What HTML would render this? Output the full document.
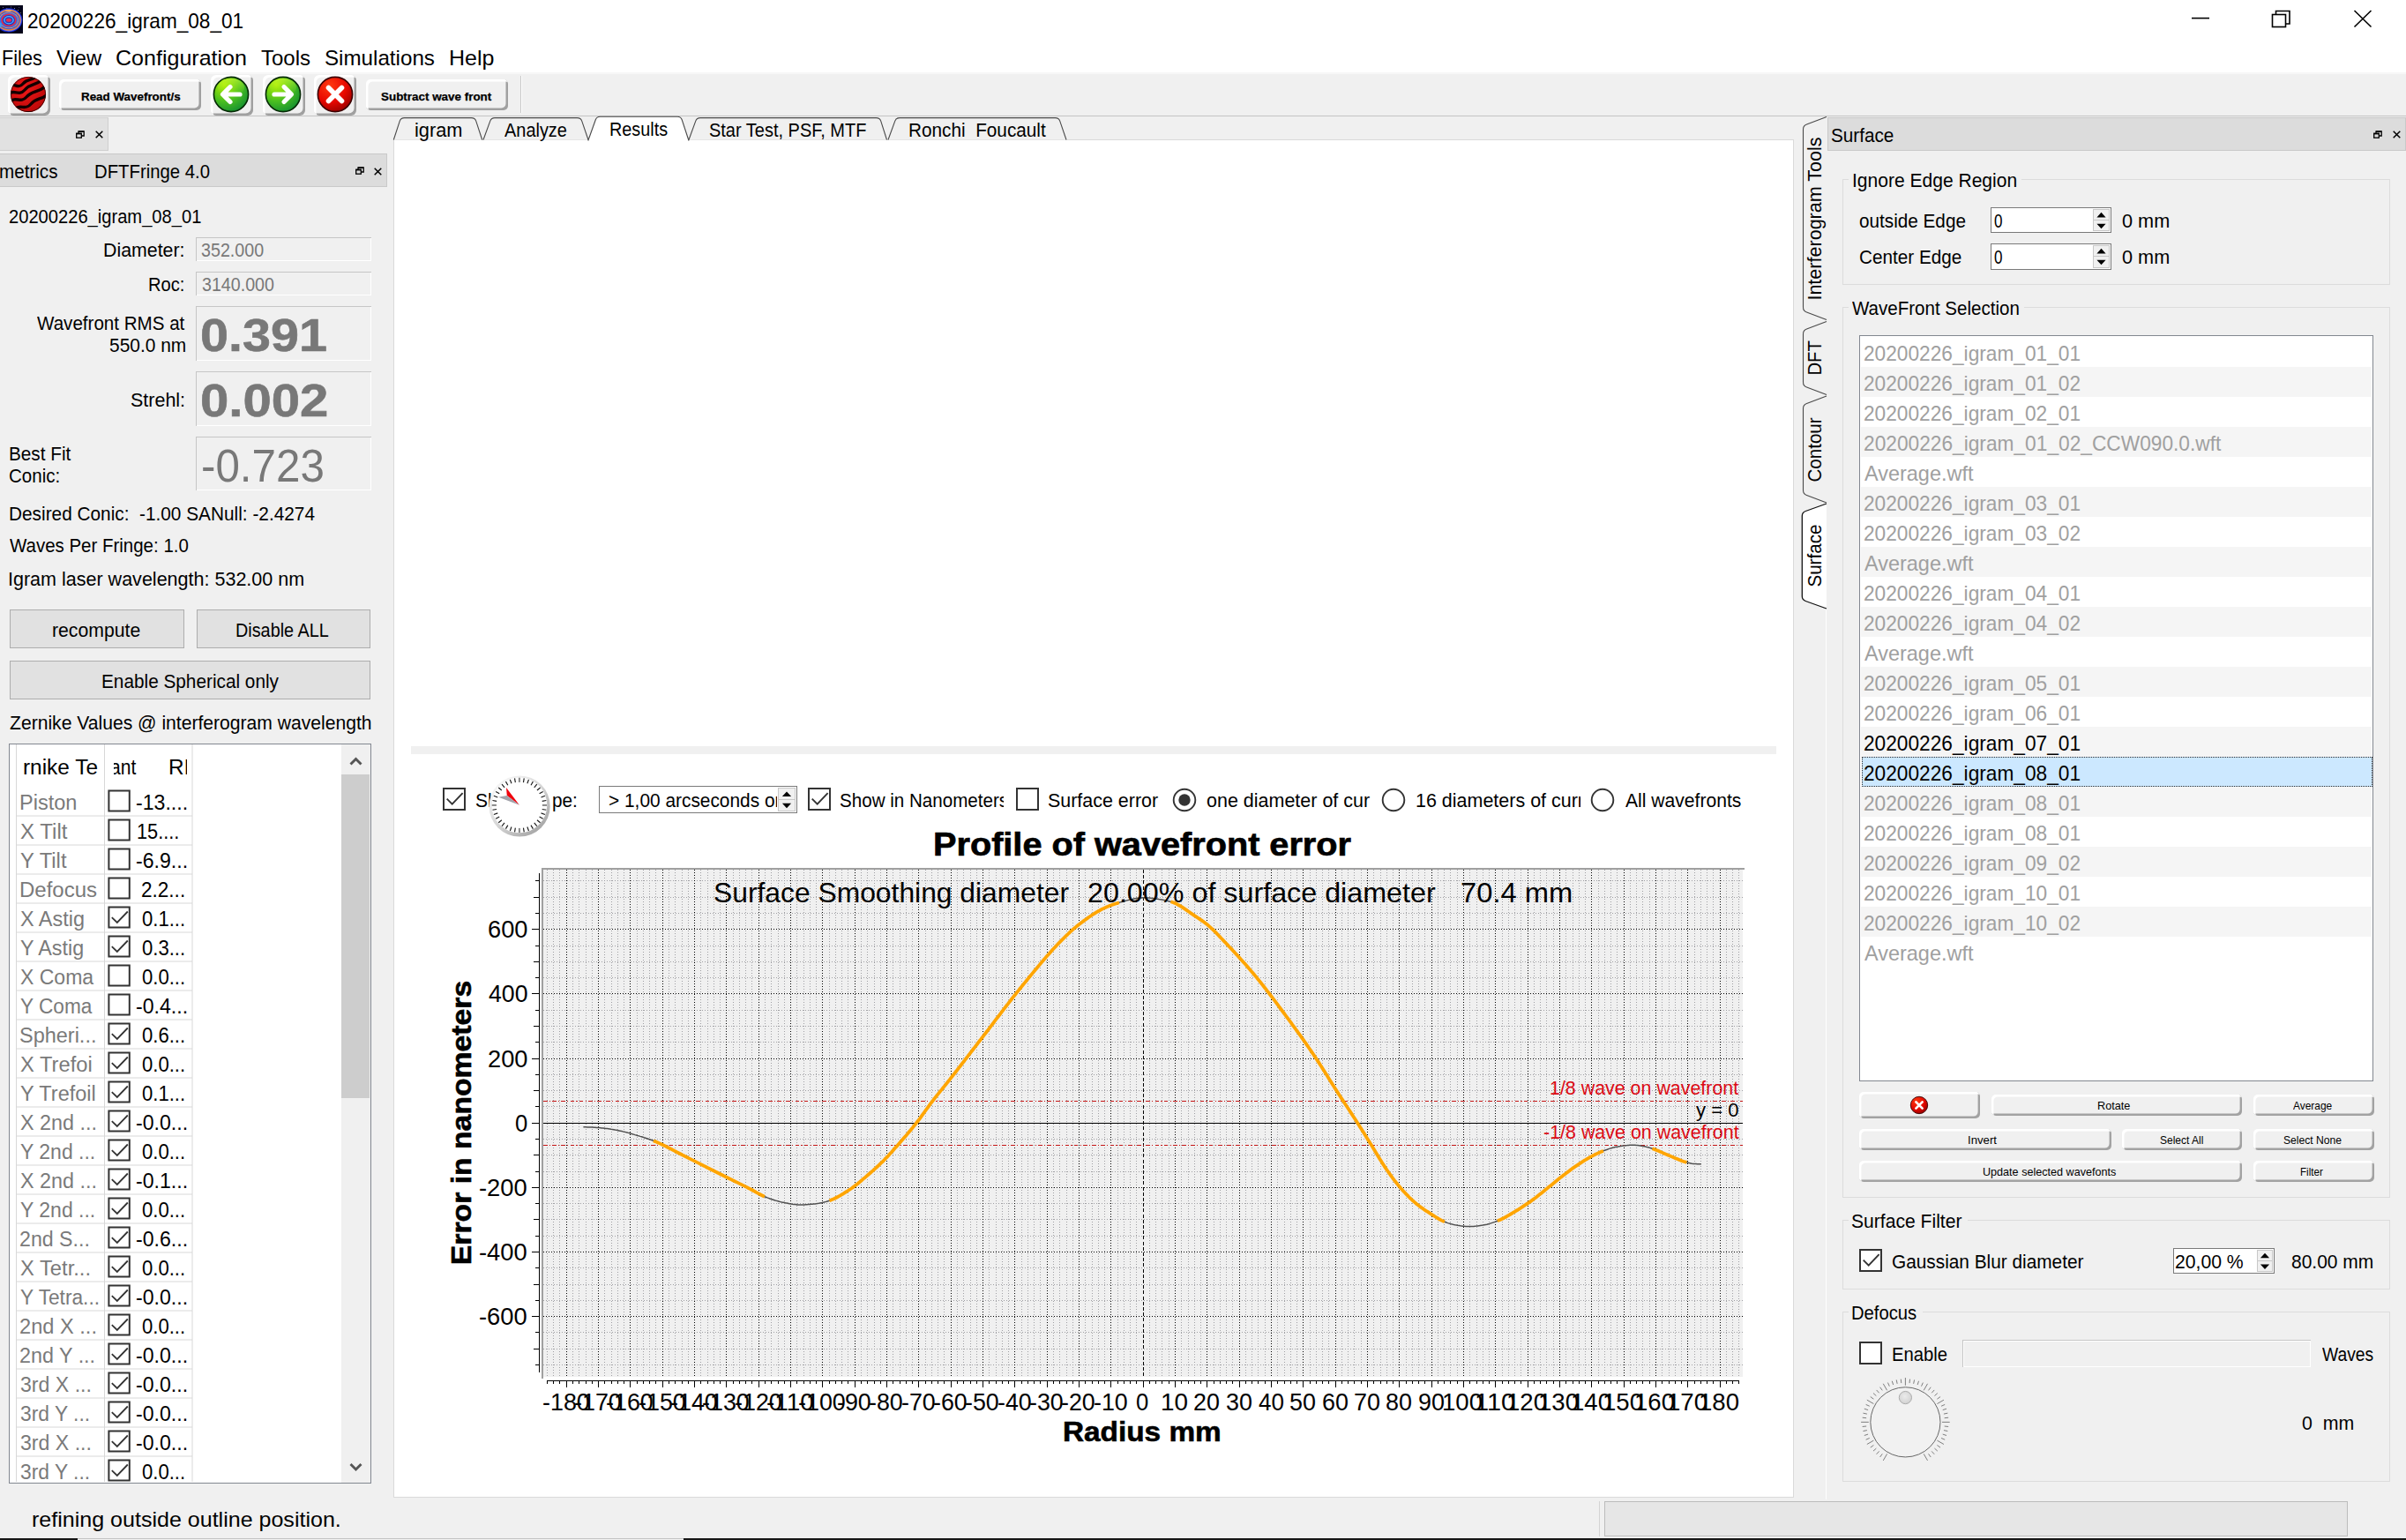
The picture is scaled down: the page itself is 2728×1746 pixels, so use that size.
<!DOCTYPE html>
<html><head><meta charset="utf-8"><title>DFTFringe</title>
<style>
html,body{margin:0;padding:0;}
body{width:2728px;height:1746px;overflow:hidden;background:#f0f0f0;position:relative;font-family:"Liberation Sans",sans-serif;}
body div,body svg,body span{position:absolute;}
.t{white-space:pre;transform-origin:0 0;display:block;}
</style></head><body>
<div style="left:0px;top:0px;width:2728px;height:82px;background:#ffffff;"></div>
<div style="left:0px;top:82px;width:2728px;height:2px;background:#f7f7f7;"></div>
<svg style="left:0px;top:6px;" width="26" height="32" viewBox="0 0 26 32"><defs><clipPath id="ic"><rect width="26" height="32"/></clipPath></defs><rect width="26" height="32" fill="#03031a"/>
<g clip-path="url(#ic)"><g transform="translate(10,16.8)">
<ellipse rx="15.4" ry="13.6" fill="#1426c4"/>
<ellipse rx="14.4" ry="12.6" fill="#6a7cff"/>
<ellipse rx="13.6" ry="11.8" fill="#f0842a"/>
<ellipse rx="12.4" ry="10.4" fill="#2a50e6"/>
<ellipse rx="11.2" ry="9.4" fill="#f09a58"/>
<ellipse rx="10.4" ry="8.6" fill="#2f6df2"/>
<ellipse rx="8.8" ry="7.4" fill="#dc3048"/>
<ellipse rx="7.0" ry="5.8" fill="#1e34c4"/>
<ellipse rx="5.8" ry="4.7" fill="#48b4ff"/>
<ellipse rx="4.4" ry="3.5" fill="#2a3cc0"/>
<ellipse rx="3.1" ry="2.0" fill="#e43050"/>
<ellipse cx="-0.5" cy="-10.6" rx="3.6" ry="1.0" fill="#f4a860"/>
<rect x="-10" y="3" width="1.6" height="5" fill="#30a0ff"/>
</g>
<g fill="#c8c8e8"><rect x="3" y="2" width="0.7" height="0.7"/><rect x="7.5" y="3.4" width="0.7" height="0.7"/><rect x="12" y="1.6" width="0.7" height="0.7"/><rect x="16" y="3" width="0.8" height="0.8"/><rect x="20" y="5" width="0.8" height="0.8"/><rect x="23" y="8.4" width="0.7" height="0.7"/><rect x="21.5" y="2.2" width="0.6" height="0.6"/></g></g></svg>
<span class="t" style="font-size:24px;line-height:24px;color:#000;left:30.76px;top:12px;transform:scaleX(0.9421);">20200226_igram_08_01</span>
<svg style="left:2470px;top:0px;" width="240" height="46" viewBox="0 0 240 46"><g stroke="#000" stroke-width="1.6" fill="none">
<line x1="15" y1="20.6" x2="35" y2="20.6"/>
<rect x="106.5" y="16.5" width="15" height="14"/>
<path d="M110.5 16.5V12.5H126V27H121.5"/>
<path d="M199.5 12L218.5 30.5M218.5 12L199.5 30.5"/></g></svg>
<span class="t" style="font-size:24px;line-height:24px;color:#000;left:1.60px;top:54px;transform:scaleX(0.9039);">Files</span>
<span class="t" style="font-size:24px;line-height:24px;color:#000;left:64.30px;top:54px;transform:scaleX(0.9894);">View</span>
<span class="t" style="font-size:24px;line-height:24px;color:#000;left:131.46px;top:54px;transform:scaleX(1.0434);">Configuration</span>
<span class="t" style="font-size:24px;line-height:24px;color:#000;left:296.00px;top:54px;">Tools</span>
<span class="t" style="font-size:24px;line-height:24px;color:#000;left:367.59px;top:54px;transform:scaleX(1.0069);">Simulations</span>
<span class="t" style="font-size:24px;line-height:24px;color:#000;left:508.96px;top:54px;transform:scaleX(1.0414);">Help</span>
<div style="left:0px;top:84px;width:2728px;height:47px;background:#f0f0f0;"></div>
<div style="left:0px;top:131px;width:2728px;height:1px;background:#c4c4c4;"></div>
<div style="left:8.5px;top:84.5px;width:48.5px;height:46.5px;background:#f0f0f0;border-radius:6px;box-shadow:inset 2.5px 2.5px 0 0 #ffffff, inset -2.5px -2.5px 0 0 #a0a0a0;"></div>
<div style="left:67.3px;top:90.3px;width:160.3px;height:34.5px;background:#f0f0f0;border-radius:5px;box-shadow:inset 2.5px 2.5px 0 0 #ffffff, inset -2.5px -2.5px 0 0 #a0a0a0;"></div>
<div style="left:238.8px;top:84.5px;width:48px;height:46.5px;background:#f0f0f0;border-radius:6px;box-shadow:inset 2.5px 2.5px 0 0 #ffffff, inset -2.5px -2.5px 0 0 #a0a0a0;"></div>
<div style="left:298px;top:84.5px;width:47.5px;height:46.5px;background:#f0f0f0;border-radius:6px;box-shadow:inset 2.5px 2.5px 0 0 #ffffff, inset -2.5px -2.5px 0 0 #a0a0a0;"></div>
<div style="left:356.4px;top:84.5px;width:48px;height:46.5px;background:#f0f0f0;border-radius:6px;box-shadow:inset 2.5px 2.5px 0 0 #ffffff, inset -2.5px -2.5px 0 0 #a0a0a0;"></div>
<div style="left:415.3px;top:90.3px;width:160.4px;height:34.5px;background:#f0f0f0;border-radius:5px;box-shadow:inset 2.5px 2.5px 0 0 #ffffff, inset -2.5px -2.5px 0 0 #a0a0a0;"></div>
<div style="left:590px;top:86px;width:1px;height:42px;background:#c8c8c8;"></div>
<div style="left:591px;top:86px;width:1px;height:42px;background:#ffffff;"></div>
<span class="t" style="font-size:12.6px;line-height:12.6px;color:#000;font-weight:700;-webkit-text-stroke:0.25px #000;left:91.60px;top:104px;transform:scaleX(1.0633);">Read Wavefront/s</span>
<span class="t" style="font-size:12.6px;line-height:12.6px;color:#000;font-weight:700;-webkit-text-stroke:0.25px #000;left:432.20px;top:104px;transform:scaleX(1.0653);">Subtract wave front</span>
<svg style="left:11px;top:86px;" width="42" height="42" viewBox="0 0 42 42"><defs><clipPath id="cw"><circle cx="21" cy="21" r="20"/></clipPath>
<radialGradient id="rw" cx="40%" cy="35%" r="70%"><stop offset="0" stop-color="#f01818"/><stop offset="1" stop-color="#b80808"/></radialGradient></defs>
<circle cx="21" cy="21" r="20" fill="url(#rw)"/>
<g clip-path="url(#cw)" stroke="#150000" stroke-width="3.4" fill="none" stroke-linecap="round">
<path d="M-2 12 C4 6,9 16,15 9 S26 6,30 0"/>
<path d="M-2 21 C5 14,10 24,17 16 S28 12,36 5"/>
<path d="M0 30 C7 22,12 32,19 24 S31 20,42 11"/>
<path d="M6 38 C12 31,17 40,24 32 S36 28,44 20"/>
<path d="M16 44 C22 38,27 46,33 39 S40 36,46 30"/>
</g>
<circle cx="21" cy="21" r="19.6" fill="none" stroke="#300000" stroke-width="0.8"/></svg>
<svg style="left:0px;top:0px;" width="620" height="140" viewBox="0 0 620 140"><defs>
<radialGradient id="gg" cx="30%" cy="22%" r="85%"><stop offset="0" stop-color="#b4f000"/><stop offset="0.55" stop-color="#4cc020"/><stop offset="1" stop-color="#149030"/></radialGradient>
<linearGradient id="gh" x1="0" y1="0" x2="0" y2="1"><stop offset="0" stop-color="#d8ff40" stop-opacity="0.55"/><stop offset="1" stop-color="#80e020" stop-opacity="0"/></linearGradient>
<radialGradient id="rg" cx="35%" cy="25%" r="85%"><stop offset="0" stop-color="#ff3a10"/><stop offset="0.55" stop-color="#e80800"/><stop offset="1" stop-color="#900000"/></radialGradient>
</defs><g transform="translate(241 86)"><circle cx="21" cy="21" r="19.6" fill="url(#gg)" stroke="#052a05" stroke-width="1.6"/>
<ellipse cx="21" cy="13" rx="15" ry="10" fill="url(#gh)"/><path d="M31 21H12M20 12.5L11.5 21L20 29.5" stroke="#fff" stroke-width="5.2" fill="none" stroke-linecap="round" stroke-linejoin="round"/></g><g transform="translate(300 86)"><circle cx="21" cy="21" r="19.6" fill="url(#gg)" stroke="#052a05" stroke-width="1.6"/>
<ellipse cx="21" cy="13" rx="15" ry="10" fill="url(#gh)"/><g transform="translate(42 0) scale(-1 1)"><path d="M31 21H12M20 12.5L11.5 21L20 29.5" stroke="#fff" stroke-width="5.2" fill="none" stroke-linecap="round" stroke-linejoin="round"/></g></g>
<g transform="translate(359 86)"><circle cx="21" cy="21" r="19.6" fill="url(#rg)" stroke="#3a0000" stroke-width="1.6"/>
<path d="M13.5 13.5L28.5 28.5M28.5 13.5L13.5 28.5" stroke="#fff" stroke-width="5.6" stroke-linecap="round"/></g></svg>
<div style="left:0px;top:133px;width:123px;height:38px;background:#e1e1e1;border:1px solid #cfcfcf;box-sizing:border-box;border-left:none;"></div>
<svg style="left:86.3px;top:147.7px;" width="10" height="9" viewBox="0 0 10 9"><g fill="none" stroke="#000" stroke-width="1.3"><rect x="0.7" y="3.2" width="5.6" height="5"/><path d="M3 3V0.8H9.2V6H6.5"/></g><rect x="0.7" y="3" width="5.6" height="1.4" fill="#000"/><rect x="3" y="0.5" width="6.2" height="1.3" fill="#000"/></svg>
<svg style="left:107.5px;top:148.2px;" width="9" height="9" viewBox="0 0 9 9"><path d="M0.7 0.7L8.3 8.3M8.3 0.7L0.7 8.3" stroke="#000" stroke-width="1.5"/></svg>
<div style="left:0px;top:174px;width:439px;height:38px;background:#dcdcdc;border:1px solid #c9c9c9;box-sizing:border-box;border-left:none;"></div>
<div style="left:0px;top:178px;width:80px;height:37px;overflow:hidden"><span class="t" style="font-size:22px;line-height:22px;color:#000;left:-1.44px;top:6px;transform:scaleX(0.9372);">metrics</span></div>
<span class="t" style="font-size:22px;line-height:22px;color:#000;left:106.58px;top:184px;transform:scaleX(0.9240);">DFTFringe 4.0</span>
<svg style="left:402.8px;top:189.3px;" width="10" height="9" viewBox="0 0 10 9"><g fill="none" stroke="#000" stroke-width="1.3"><rect x="0.7" y="3.2" width="5.6" height="5"/><path d="M3 3V0.8H9.2V6H6.5"/></g><rect x="0.7" y="3" width="5.6" height="1.4" fill="#000"/><rect x="3" y="0.5" width="6.2" height="1.3" fill="#000"/></svg>
<svg style="left:423.8px;top:189.8px;" width="9" height="9" viewBox="0 0 9 9"><path d="M0.7 0.7L8.3 8.3M8.3 0.7L0.7 8.3" stroke="#000" stroke-width="1.5"/></svg>
<span class="t" style="font-size:22px;line-height:22px;color:#000;left:9.88px;top:235px;transform:scaleX(0.9153);">20200226_igram_08_01</span>
<span class="t" style="font-size:22px;line-height:22px;color:#000;left:117.33px;top:273px;transform:scaleX(0.9695);">Diameter:</span>
<span class="t" style="font-size:22px;line-height:22px;color:#000;left:168.39px;top:312px;transform:scaleX(0.9137);">Roc:</span>
<div style="left:222px;top:269px;width:198.5px;height:26.5px;background:#f0f0f0;box-shadow:inset 1px 1px 0 0 #c6c6c6, inset -1px -1px 0 0 #ffffff;"></div>
<div style="left:222px;top:308px;width:198.5px;height:26.5px;background:#f0f0f0;box-shadow:inset 1px 1px 0 0 #c6c6c6, inset -1px -1px 0 0 #ffffff;"></div>
<span class="t" style="font-size:22px;line-height:22px;color:#787878;left:228.40px;top:273px;transform:scaleX(0.8942);">352.000</span>
<span class="t" style="font-size:22px;line-height:22px;color:#787878;left:228.80px;top:312px;transform:scaleX(0.8927);">3140.000</span>
<span class="t" style="font-size:22px;line-height:22px;color:#000;left:42.30px;top:356px;transform:scaleX(0.9352);">Wavefront RMS at</span>
<span class="t" style="font-size:22px;line-height:22px;color:#000;left:123.50px;top:381px;transform:scaleX(0.9513);">550.0 nm</span>
<div style="left:222px;top:347px;width:198.5px;height:61.5px;background:#f0f0f0;box-shadow:inset 1px 1px 0 0 #c6c6c6, inset -1px -1px 0 0 #ffffff;"></div>
<span class="t" style="font-size:51px;line-height:51px;color:#787878;font-weight:700;-webkit-text-stroke:0.6px #787878;left:227.25px;top:355px;transform:scaleX(1.1275);">0.391</span>
<span class="t" style="font-size:22px;line-height:22px;color:#000;left:147.62px;top:443px;transform:scaleX(0.9761);">Strehl:</span>
<div style="left:222px;top:421px;width:198.5px;height:61.5px;background:#f0f0f0;box-shadow:inset 1px 1px 0 0 #c6c6c6, inset -1px -1px 0 0 #ffffff;"></div>
<span class="t" style="font-size:51px;line-height:51px;color:#787878;font-weight:700;-webkit-text-stroke:0.6px #787878;left:227.22px;top:429px;transform:scaleX(1.1387);">0.002</span>
<span class="t" style="font-size:22px;line-height:22px;color:#000;left:9.86px;top:504px;transform:scaleX(0.9420);">Best Fit</span>
<span class="t" style="font-size:22px;line-height:22px;color:#000;left:9.87px;top:529px;transform:scaleX(0.9328);">Conic:</span>
<div style="left:222px;top:495px;width:198.5px;height:61.2px;background:#f0f0f0;box-shadow:inset 1px 1px 0 0 #c6c6c6, inset -1px -1px 0 0 #ffffff;"></div>
<span class="t" style="font-size:52px;line-height:52px;color:#787878;left:227.70px;top:502px;transform:scaleX(0.9483);">-0.723</span>
<span class="t" style="font-size:22px;line-height:22px;color:#000;left:9.85px;top:572px;transform:scaleX(0.9458);">Desired Conic:  -1.00 SANull: -2.4274</span>
<span class="t" style="font-size:22px;line-height:22px;color:#000;left:10.80px;top:608px;transform:scaleX(0.9302);">Waves Per Fringe: 1.0</span>
<span class="t" style="font-size:22px;line-height:22px;color:#000;left:8.84px;top:646px;transform:scaleX(0.9782);">Igram laser wavelength: 532.00 nm</span>
<div style="left:11px;top:691px;width:198px;height:43.8px;background:#e1e1e1;border:1px solid #adadad;box-sizing:border-box;"></div>
<div style="left:223px;top:691px;width:197px;height:43.8px;background:#e1e1e1;border:1px solid #adadad;box-sizing:border-box;"></div>
<div style="left:11px;top:749px;width:409px;height:43.6px;background:#e1e1e1;border:1px solid #adadad;box-sizing:border-box;"></div>
<span class="t" style="font-size:22px;line-height:22px;color:#000;left:59.34px;top:704px;transform:scaleX(0.9639);">recompute</span>
<span class="t" style="font-size:22px;line-height:22px;color:#000;left:267.40px;top:704px;transform:scaleX(0.9004);">Disable ALL</span>
<span class="t" style="font-size:22px;line-height:22px;color:#000;left:114.56px;top:762px;transform:scaleX(0.9443);">Enable Spherical only</span>
<span class="t" style="font-size:22px;line-height:22px;color:#000;left:10.60px;top:809px;transform:scaleX(0.9595);">Zernike Values @ interferogram wavelength</span>
<div style="left:10px;top:843px;width:411px;height:838.5px;background:#ffffff;border:1px solid #828790;box-sizing:border-box;"></div>
<svg style="left:10.5px;top:844px;" width="408.5" height="836" viewBox="0 0 408.5 836"><g stroke="#d8d8d8" stroke-width="1">
<path d="M7.5 0V836M107.5 0V836M207 0V836"/><path d="M7 81.0H207"/><path d="M7 114.0H207"/><path d="M7 147.0H207"/><path d="M7 180.0H207"/><path d="M7 213.0H207"/><path d="M7 246.0H207"/><path d="M7 279.0H207"/><path d="M7 312.0H207"/><path d="M7 345.0H207"/><path d="M7 378.0H207"/><path d="M7 411.0H207"/><path d="M7 444.0H207"/><path d="M7 477.0H207"/><path d="M7 510.0H207"/><path d="M7 543.0H207"/><path d="M7 576.0H207"/><path d="M7 609.0H207"/><path d="M7 642.0H207"/><path d="M7 675.0H207"/><path d="M7 708.0H207"/><path d="M7 741.0H207"/><path d="M7 774.0H207"/><path d="M7 807.0H207"/><path d="M7 840.0H207"/></g></svg>
<div style="left:19.5px;top:853px;width:98.0px;height:38px;overflow:hidden"><span class="t" style="font-size:23px;line-height:23px;color:#000;left:6.44px;top:6px;transform:scaleX(1.0604);">rnike Te</span></div>
<div style="left:128.6px;top:853px;width:31.400000000000006px;height:38px;overflow:hidden"><span class="t" style="font-size:23px;line-height:23px;color:#000;left:-3.40px;top:6px;transform:scaleX(0.9146);">ant</span></div>
<div style="left:160px;top:853px;width:51.80000000000001px;height:38px;overflow:hidden"><span class="t" style="font-size:23px;line-height:23px;color:#000;left:30.64px;top:6px;transform:scaleX(1.0577);">RI</span></div>
<span class="t" style="font-size:23px;line-height:23px;color:#7a7a7a;left:21.98px;top:899px;transform:scaleX(1.0236);">Piston</span>
<span class="t" style="font-size:23px;line-height:23px;color:#000;left:154.29px;top:899px;transform:scaleX(1.0051);">-13....</span>
<span class="t" style="font-size:23px;line-height:23px;color:#7a7a7a;left:23.00px;top:932px;transform:scaleX(1.0451);">X Tilt</span>
<span class="t" style="font-size:23px;line-height:23px;color:#000;left:154.55px;top:932px;transform:scaleX(0.9456);">15....</span>
<span class="t" style="font-size:23px;line-height:23px;color:#7a7a7a;left:23.00px;top:965px;transform:scaleX(1.0355);">Y Tilt</span>
<span class="t" style="font-size:23px;line-height:23px;color:#000;left:154.29px;top:965px;transform:scaleX(1.0051);">-6.9...</span>
<span class="t" style="font-size:23px;line-height:23px;color:#7a7a7a;left:21.96px;top:998px;transform:scaleX(1.0437);">Defocus</span>
<span class="t" style="font-size:23px;line-height:23px;color:#000;left:160.22px;top:998px;transform:scaleX(0.9804);">2.2...</span>
<span class="t" style="font-size:23px;line-height:23px;color:#7a7a7a;left:23.00px;top:1031px;transform:scaleX(1.0198);">X Astig</span>
<span class="t" style="font-size:23px;line-height:23px;color:#000;left:161.20px;top:1031px;transform:scaleX(0.9607);">0.1...</span>
<span class="t" style="font-size:23px;line-height:23px;color:#7a7a7a;left:23.00px;top:1064px;transform:scaleX(1.0129);">Y Astig</span>
<span class="t" style="font-size:23px;line-height:23px;color:#000;left:161.20px;top:1064px;transform:scaleX(0.9607);">0.3...</span>
<span class="t" style="font-size:23px;line-height:23px;color:#7a7a7a;left:23.00px;top:1097px;">X Coma</span>
<span class="t" style="font-size:23px;line-height:23px;color:#000;left:161.20px;top:1097px;transform:scaleX(0.9607);">0.0...</span>
<span class="t" style="font-size:23px;line-height:23px;color:#7a7a7a;left:23.00px;top:1130px;transform:scaleX(0.9845);">Y Coma</span>
<span class="t" style="font-size:23px;line-height:23px;color:#000;left:154.29px;top:1130px;transform:scaleX(1.0051);">-0.4...</span>
<span class="t" style="font-size:23px;line-height:23px;color:#7a7a7a;left:21.98px;top:1163px;transform:scaleX(1.0208);">Spheri...</span>
<span class="t" style="font-size:23px;line-height:23px;color:#000;left:161.20px;top:1163px;transform:scaleX(0.9607);">0.6...</span>
<span class="t" style="font-size:23px;line-height:23px;color:#7a7a7a;left:23.00px;top:1196px;transform:scaleX(1.0311);">X Trefoi</span>
<span class="t" style="font-size:23px;line-height:23px;color:#000;left:161.20px;top:1196px;transform:scaleX(0.9607);">0.0...</span>
<span class="t" style="font-size:23px;line-height:23px;color:#7a7a7a;left:23.00px;top:1229px;transform:scaleX(1.0219);">Y Trefoil</span>
<span class="t" style="font-size:23px;line-height:23px;color:#000;left:161.20px;top:1229px;transform:scaleX(0.9607);">0.1...</span>
<span class="t" style="font-size:23px;line-height:23px;color:#7a7a7a;left:23.00px;top:1262px;transform:scaleX(1.0145);">X 2nd ...</span>
<span class="t" style="font-size:23px;line-height:23px;color:#000;left:154.29px;top:1262px;transform:scaleX(1.0051);">-0.0...</span>
<span class="t" style="font-size:23px;line-height:23px;color:#7a7a7a;left:23.00px;top:1295px;">Y 2nd ...</span>
<span class="t" style="font-size:23px;line-height:23px;color:#000;left:161.20px;top:1295px;transform:scaleX(0.9607);">0.0...</span>
<span class="t" style="font-size:23px;line-height:23px;color:#7a7a7a;left:23.00px;top:1328px;transform:scaleX(1.0145);">X 2nd ...</span>
<span class="t" style="font-size:23px;line-height:23px;color:#000;left:154.29px;top:1328px;transform:scaleX(1.0051);">-0.1...</span>
<span class="t" style="font-size:23px;line-height:23px;color:#7a7a7a;left:23.00px;top:1361px;">Y 2nd ...</span>
<span class="t" style="font-size:23px;line-height:23px;color:#000;left:161.20px;top:1361px;transform:scaleX(0.9607);">0.0...</span>
<span class="t" style="font-size:23px;line-height:23px;color:#7a7a7a;left:21.99px;top:1394px;transform:scaleX(1.0080);">2nd S...</span>
<span class="t" style="font-size:23px;line-height:23px;color:#000;left:154.29px;top:1394px;transform:scaleX(1.0051);">-0.6...</span>
<span class="t" style="font-size:23px;line-height:23px;color:#7a7a7a;left:23.00px;top:1427px;transform:scaleX(1.0316);">X Tetr...</span>
<span class="t" style="font-size:23px;line-height:23px;color:#000;left:161.20px;top:1427px;transform:scaleX(0.9607);">0.0...</span>
<span class="t" style="font-size:23px;line-height:23px;color:#7a7a7a;left:23.00px;top:1460px;transform:scaleX(0.9874);">Y Tetra...</span>
<span class="t" style="font-size:23px;line-height:23px;color:#000;left:154.29px;top:1460px;transform:scaleX(1.0051);">-0.0...</span>
<span class="t" style="font-size:23px;line-height:23px;color:#7a7a7a;left:21.97px;top:1493px;transform:scaleX(1.0267);">2nd X ...</span>
<span class="t" style="font-size:23px;line-height:23px;color:#000;left:161.20px;top:1493px;transform:scaleX(0.9607);">0.0...</span>
<span class="t" style="font-size:23px;line-height:23px;color:#7a7a7a;left:21.99px;top:1526px;transform:scaleX(1.0147);">2nd Y ...</span>
<span class="t" style="font-size:23px;line-height:23px;color:#000;left:154.29px;top:1526px;transform:scaleX(1.0051);">-0.0...</span>
<span class="t" style="font-size:23px;line-height:23px;color:#7a7a7a;left:23.00px;top:1559px;transform:scaleX(1.0045);">3rd X ...</span>
<span class="t" style="font-size:23px;line-height:23px;color:#000;left:154.29px;top:1559px;transform:scaleX(1.0051);">-0.0...</span>
<span class="t" style="font-size:23px;line-height:23px;color:#7a7a7a;left:23.00px;top:1592px;transform:scaleX(0.9919);">3rd Y ...</span>
<span class="t" style="font-size:23px;line-height:23px;color:#000;left:154.29px;top:1592px;transform:scaleX(1.0051);">-0.0...</span>
<span class="t" style="font-size:23px;line-height:23px;color:#7a7a7a;left:23.00px;top:1625px;transform:scaleX(1.0045);">3rd X ...</span>
<span class="t" style="font-size:23px;line-height:23px;color:#000;left:154.29px;top:1625px;transform:scaleX(1.0051);">-0.0...</span>
<span class="t" style="font-size:23px;line-height:23px;color:#7a7a7a;left:23.00px;top:1658px;transform:scaleX(0.9919);">3rd Y ...</span>
<span class="t" style="font-size:23px;line-height:23px;color:#000;left:161.20px;top:1658px;transform:scaleX(0.9607);">0.0...</span>
<svg style="left:0px;top:0px;" width="230" height="1681" viewBox="0 0 230 1681"><rect x="123.4" y="896.5" width="23.4" height="23" fill="#fff" stroke="#333" stroke-width="2"/><rect x="123.4" y="929.5" width="23.4" height="23" fill="#fff" stroke="#333" stroke-width="2"/><rect x="123.4" y="962.5" width="23.4" height="23" fill="#fff" stroke="#333" stroke-width="2"/><rect x="123.4" y="995.5" width="23.4" height="23" fill="#fff" stroke="#333" stroke-width="2"/><rect x="123.4" y="1028.5" width="23.4" height="23" fill="#fff" stroke="#333" stroke-width="2"/><path d="M126.8 1040.1l6 5.8l12-12.4" fill="none" stroke="#333" stroke-width="1.8"/><rect x="123.4" y="1061.5" width="23.4" height="23" fill="#fff" stroke="#333" stroke-width="2"/><path d="M126.8 1073.1l6 5.8l12-12.4" fill="none" stroke="#333" stroke-width="1.8"/><rect x="123.4" y="1094.5" width="23.4" height="23" fill="#fff" stroke="#333" stroke-width="2"/><rect x="123.4" y="1127.5" width="23.4" height="23" fill="#fff" stroke="#333" stroke-width="2"/><rect x="123.4" y="1160.5" width="23.4" height="23" fill="#fff" stroke="#333" stroke-width="2"/><path d="M126.8 1172.1l6 5.8l12-12.4" fill="none" stroke="#333" stroke-width="1.8"/><rect x="123.4" y="1193.5" width="23.4" height="23" fill="#fff" stroke="#333" stroke-width="2"/><path d="M126.8 1205.1l6 5.8l12-12.4" fill="none" stroke="#333" stroke-width="1.8"/><rect x="123.4" y="1226.5" width="23.4" height="23" fill="#fff" stroke="#333" stroke-width="2"/><path d="M126.8 1238.1l6 5.8l12-12.4" fill="none" stroke="#333" stroke-width="1.8"/><rect x="123.4" y="1259.5" width="23.4" height="23" fill="#fff" stroke="#333" stroke-width="2"/><path d="M126.8 1271.1l6 5.8l12-12.4" fill="none" stroke="#333" stroke-width="1.8"/><rect x="123.4" y="1292.5" width="23.4" height="23" fill="#fff" stroke="#333" stroke-width="2"/><path d="M126.8 1304.1l6 5.8l12-12.4" fill="none" stroke="#333" stroke-width="1.8"/><rect x="123.4" y="1325.5" width="23.4" height="23" fill="#fff" stroke="#333" stroke-width="2"/><path d="M126.8 1337.1l6 5.8l12-12.4" fill="none" stroke="#333" stroke-width="1.8"/><rect x="123.4" y="1358.5" width="23.4" height="23" fill="#fff" stroke="#333" stroke-width="2"/><path d="M126.8 1370.1l6 5.8l12-12.4" fill="none" stroke="#333" stroke-width="1.8"/><rect x="123.4" y="1391.5" width="23.4" height="23" fill="#fff" stroke="#333" stroke-width="2"/><path d="M126.8 1403.1l6 5.8l12-12.4" fill="none" stroke="#333" stroke-width="1.8"/><rect x="123.4" y="1424.5" width="23.4" height="23" fill="#fff" stroke="#333" stroke-width="2"/><path d="M126.8 1436.1l6 5.8l12-12.4" fill="none" stroke="#333" stroke-width="1.8"/><rect x="123.4" y="1457.5" width="23.4" height="23" fill="#fff" stroke="#333" stroke-width="2"/><path d="M126.8 1469.1l6 5.8l12-12.4" fill="none" stroke="#333" stroke-width="1.8"/><rect x="123.4" y="1490.5" width="23.4" height="23" fill="#fff" stroke="#333" stroke-width="2"/><path d="M126.8 1502.1l6 5.8l12-12.4" fill="none" stroke="#333" stroke-width="1.8"/><rect x="123.4" y="1523.5" width="23.4" height="23" fill="#fff" stroke="#333" stroke-width="2"/><path d="M126.8 1535.1l6 5.8l12-12.4" fill="none" stroke="#333" stroke-width="1.8"/><rect x="123.4" y="1556.5" width="23.4" height="23" fill="#fff" stroke="#333" stroke-width="2"/><path d="M126.8 1568.1l6 5.8l12-12.4" fill="none" stroke="#333" stroke-width="1.8"/><rect x="123.4" y="1589.5" width="23.4" height="23" fill="#fff" stroke="#333" stroke-width="2"/><path d="M126.8 1601.1l6 5.8l12-12.4" fill="none" stroke="#333" stroke-width="1.8"/><rect x="123.4" y="1622.5" width="23.4" height="23" fill="#fff" stroke="#333" stroke-width="2"/><path d="M126.8 1634.1l6 5.8l12-12.4" fill="none" stroke="#333" stroke-width="1.8"/><rect x="123.4" y="1655.5" width="23.4" height="23" fill="#fff" stroke="#333" stroke-width="2"/><path d="M126.8 1667.1l6 5.8l12-12.4" fill="none" stroke="#333" stroke-width="1.8"/></svg>
<div style="left:10.5px;top:1680.5px;width:410.5px;height:1px;background:#828790;"></div>
<div style="left:0px;top:1681.5px;width:440px;height:16px;background:#f0f0f0;"></div>
<div style="left:387px;top:844px;width:33px;height:836.5px;background:#f0f0f0;"></div>
<div style="left:387px;top:878px;width:32px;height:367px;background:#cdcdcd;"></div>
<svg style="left:387px;top:844.5px;" width="33" height="836" viewBox="0 0 33 836"><g fill="none" stroke="#555" stroke-width="2.9"><path d="M10.5 21.5L16.5 15.5L22.5 21.5"/><path d="M10.5 815L16.5 821L22.5 815"/></g></svg>
<div style="left:446px;top:158px;width:1588px;height:1540px;background:#ffffff;border:1px solid #dadada;box-sizing:border-box;"></div>
<svg style="left:0px;top:0px;" width="1300" height="165" viewBox="0 0 1300 165"><path d="M446.3 158.5L453.3 137.1Q454.5 133.6 458.5 133.6H534.5Q538.5 133.6 539.7 137.1L546.7 158.5" fill="#f0f0f0" stroke="#4a4a4a" stroke-width="1.1"/><path d="M548 158.5L555.8 137.1Q557.0 133.6 561.0 133.6H654.5Q658.5 133.6 659.7 137.1L667 158.5" fill="#f0f0f0" stroke="#4a4a4a" stroke-width="1.1"/><path d="M781 158.5L788.8 137.1Q790.0 133.6 794.0 133.6H993.5Q997.5 133.6 998.7 137.1L1005.5 158.5" fill="#f0f0f0" stroke="#4a4a4a" stroke-width="1.1"/><path d="M1007 158.5L1014.8 137.1Q1016.0 133.6 1020.0 133.6H1196.5Q1200.5 133.6 1201.7 137.1L1209 158.5" fill="#f0f0f0" stroke="#4a4a4a" stroke-width="1.1"/><path d="M666.8 159.5L675.3 135.7Q676.5 132.2 680.5 132.2H768.0Q772.0 132.2 773.2 135.7L781 159.5" fill="#ffffff" stroke="#4a4a4a" stroke-width="1.1"/></svg>
<div style="left:668px;top:158px;width:112px;height:2px;background:#ffffff;"></div>
<span class="t" style="font-size:22px;line-height:22px;color:#000;left:469.81px;top:137px;transform:scaleX(0.9908);">igram</span>
<span class="t" style="font-size:22px;line-height:22px;color:#000;left:572.30px;top:137px;transform:scaleX(0.9060);">Analyze</span>
<span class="t" style="font-size:22px;line-height:22px;color:#000;left:690.90px;top:136px;transform:scaleX(0.9011);">Results</span>
<span class="t" style="font-size:22px;line-height:22px;color:#000;left:804.29px;top:137px;transform:scaleX(0.9080);">Star Test, PSF, MTF</span>
<span class="t" style="font-size:22px;line-height:22px;color:#000;left:1030.36px;top:137px;transform:scaleX(0.9434);">Ronchi  Foucault</span>
<div style="left:466px;top:845.5px;width:1548px;height:9.5px;background:#f0f0f0;"></div>
<svg style="left:502px;top:893px;" width="26" height="26" viewBox="0 0 26 26"><rect x="1" y="1" width="24" height="24" fill="#fff" stroke="#333" stroke-width="2"/><path d="M4.7 12.7L10.7 18.7L22.6 6.2" fill="none" stroke="#333" stroke-width="1.9"/></svg>
<span class="t" style="font-size:22px;line-height:22px;color:#000;left:538.64px;top:897px;transform:scaleX(0.9562);">Sl</span>
<span class="t" style="font-size:22px;line-height:22px;color:#000;left:625.56px;top:897px;transform:scaleX(0.9448);">pe:</span>
<div style="left:679.4px;top:891px;width:225px;height:31px;background:#ffffff;border:1px solid #7a7a7a;box-sizing:border-box;"></div>
<div style="left:882.4px;top:893px;width:20px;height:27px;background:#f0f0f0;border:1px solid #c8c8c8;box-sizing:border-box;"></div>
<div style="left:882.4px;top:906.0px;width:20px;height:1px;background:#c8c8c8;"></div>
<svg style="left:882.4px;top:893px;" width="20" height="27" viewBox="0 0 20 27"><path d="M4.9 10.0L10.0 4.4L15.1 10.0Z M4.9 17.7L10.0 23.3L15.1 17.7Z" fill="#000"/></svg>
<div style="left:684px;top:891px;width:196.60000000000002px;height:37px;overflow:hidden"><span class="t" style="font-size:22px;line-height:22px;color:#000;left:5.65px;top:6px;transform:scaleX(0.9485);">&gt; 1,00 arcseconds or</span></div>
<svg style="left:916px;top:893px;" width="26" height="26" viewBox="0 0 26 26"><rect x="1" y="1" width="24" height="24" fill="#fff" stroke="#333" stroke-width="2"/><path d="M4.7 12.7L10.7 18.7L22.6 6.2" fill="none" stroke="#333" stroke-width="1.9"/></svg>
<div style="left:950px;top:891px;width:188.20000000000005px;height:37px;overflow:hidden"><span class="t" style="font-size:22px;line-height:22px;color:#000;left:2.36px;top:6px;transform:scaleX(0.9360);">Show in Nanometers</span></div>
<svg style="left:1152px;top:893px;" width="26" height="26" viewBox="0 0 26 26"><rect x="1" y="1" width="24" height="24" fill="#fff" stroke="#333" stroke-width="2"/></svg>
<span class="t" style="font-size:22px;line-height:22px;color:#000;left:1188.03px;top:897px;transform:scaleX(0.9744);">Surface error</span>
<svg style="left:1328px;top:891.5px;" width="30" height="30" viewBox="0 0 30 30"><circle cx="15" cy="15" r="12.3" fill="#fff" stroke="#333" stroke-width="1.9"/><circle cx="15" cy="15" r="6.7" fill="#333"/></svg>
<div style="left:1360px;top:891px;width:193.79999999999995px;height:37px;overflow:hidden"><span class="t" style="font-size:22px;line-height:22px;color:#000;left:8.00px;top:6px;transform:scaleX(0.9769);">one diameter of curr</span></div>
<svg style="left:1565px;top:891.5px;" width="30" height="30" viewBox="0 0 30 30"><circle cx="15" cy="15" r="12.3" fill="#fff" stroke="#333" stroke-width="1.9"/></svg>
<div style="left:1600px;top:891px;width:192.20000000000005px;height:37px;overflow:hidden"><span class="t" style="font-size:22px;line-height:22px;color:#000;left:4.82px;top:6px;transform:scaleX(0.9763);">16 diameters of curr</span></div>
<svg style="left:1802px;top:891.5px;" width="30" height="30" viewBox="0 0 30 30"><circle cx="15" cy="15" r="12.3" fill="#fff" stroke="#333" stroke-width="1.9"/></svg>
<span class="t" style="font-size:22px;line-height:22px;color:#000;left:1842.50px;top:897px;transform:scaleX(0.9588);">All wavefronts</span>
<svg style="left:520px;top:870px;" width="140" height="90" viewBox="0 0 140 90"><defs><linearGradient id="cring" x1="0.15" y1="0.1" x2="0.85" y2="0.9"><stop offset="0" stop-color="#f6f6f6"/><stop offset="0.5" stop-color="#d6d6d6"/><stop offset="1" stop-color="#a6a6a6"/></linearGradient></defs>
<circle cx="69.10" cy="44.00" r="34.6" fill="url(#cring)"/>
<circle cx="68.90" cy="42.90" r="31.4" fill="#ffffff"/><line x1="68.90" y1="16.90" x2="68.90" y2="11.70" stroke="#8c8c8c" stroke-width="2.1"/><line x1="73.45" y1="17.10" x2="74.27" y2="12.47" stroke="#1a1a1a" stroke-width="1.15"/><line x1="77.86" y1="18.28" x2="79.47" y2="13.86" stroke="#1a1a1a" stroke-width="1.15"/><line x1="82.00" y1="20.21" x2="84.35" y2="16.14" stroke="#1a1a1a" stroke-width="1.15"/><line x1="85.74" y1="22.83" x2="88.76" y2="19.23" stroke="#1a1a1a" stroke-width="1.15"/><line x1="88.97" y1="26.06" x2="92.57" y2="23.04" stroke="#1a1a1a" stroke-width="1.15"/><line x1="91.59" y1="29.80" x2="95.66" y2="27.45" stroke="#1a1a1a" stroke-width="1.15"/><line x1="93.52" y1="33.94" x2="97.94" y2="32.33" stroke="#1a1a1a" stroke-width="1.15"/><line x1="94.70" y1="38.35" x2="99.33" y2="37.53" stroke="#1a1a1a" stroke-width="1.15"/><line x1="94.90" y1="42.90" x2="100.10" y2="42.90" stroke="#8c8c8c" stroke-width="2.1"/><line x1="94.70" y1="47.45" x2="99.33" y2="48.27" stroke="#1a1a1a" stroke-width="1.15"/><line x1="93.52" y1="51.86" x2="97.94" y2="53.47" stroke="#1a1a1a" stroke-width="1.15"/><line x1="91.59" y1="56.00" x2="95.66" y2="58.35" stroke="#1a1a1a" stroke-width="1.15"/><line x1="88.97" y1="59.74" x2="92.57" y2="62.76" stroke="#1a1a1a" stroke-width="1.15"/><line x1="85.74" y1="62.97" x2="88.76" y2="66.57" stroke="#1a1a1a" stroke-width="1.15"/><line x1="82.00" y1="65.59" x2="84.35" y2="69.66" stroke="#1a1a1a" stroke-width="1.15"/><line x1="77.86" y1="67.52" x2="79.47" y2="71.94" stroke="#1a1a1a" stroke-width="1.15"/><line x1="73.45" y1="68.70" x2="74.27" y2="73.33" stroke="#1a1a1a" stroke-width="1.15"/><line x1="68.90" y1="68.90" x2="68.90" y2="74.10" stroke="#8c8c8c" stroke-width="2.1"/><line x1="64.35" y1="68.70" x2="63.53" y2="73.33" stroke="#1a1a1a" stroke-width="1.15"/><line x1="59.94" y1="67.52" x2="58.33" y2="71.94" stroke="#1a1a1a" stroke-width="1.15"/><line x1="55.80" y1="65.59" x2="53.45" y2="69.66" stroke="#1a1a1a" stroke-width="1.15"/><line x1="52.06" y1="62.97" x2="49.04" y2="66.57" stroke="#1a1a1a" stroke-width="1.15"/><line x1="48.83" y1="59.74" x2="45.23" y2="62.76" stroke="#1a1a1a" stroke-width="1.15"/><line x1="46.21" y1="56.00" x2="42.14" y2="58.35" stroke="#1a1a1a" stroke-width="1.15"/><line x1="44.28" y1="51.86" x2="39.86" y2="53.47" stroke="#1a1a1a" stroke-width="1.15"/><line x1="43.10" y1="47.45" x2="38.47" y2="48.27" stroke="#1a1a1a" stroke-width="1.15"/><line x1="42.90" y1="42.90" x2="37.70" y2="42.90" stroke="#8c8c8c" stroke-width="2.1"/><line x1="43.10" y1="38.35" x2="38.47" y2="37.53" stroke="#1a1a1a" stroke-width="1.15"/><line x1="44.28" y1="33.94" x2="39.86" y2="32.33" stroke="#1a1a1a" stroke-width="1.15"/><line x1="46.21" y1="29.80" x2="42.14" y2="27.45" stroke="#1a1a1a" stroke-width="1.15"/><line x1="48.83" y1="26.06" x2="45.23" y2="23.04" stroke="#1a1a1a" stroke-width="1.15"/><line x1="52.06" y1="22.83" x2="49.04" y2="19.23" stroke="#1a1a1a" stroke-width="1.15"/><line x1="55.80" y1="20.21" x2="53.45" y2="16.14" stroke="#1a1a1a" stroke-width="1.15"/><line x1="59.94" y1="18.28" x2="58.33" y2="13.86" stroke="#1a1a1a" stroke-width="1.15"/><line x1="64.35" y1="17.10" x2="63.53" y2="12.47" stroke="#1a1a1a" stroke-width="1.15"/>
<path d="M68.9 42.8L54.0 22.9L54.8 32.0Z" fill="#f0000c"/>
<path d="M68.9 42.8L54.8 32.0L45.2 33.7Z" fill="#a2a2aa"/></svg>
<div style="left:614px;top:984px;width:1364px;height:579px;background:#f0f0f0;box-shadow:inset 2px 2px 0 0 #a0a0a0, inset -2px -2px 0 0 #ffffff;"></div>
<svg style="left:500px;top:930px;" width="1500" height="700" viewBox="0 0 1500 700"><g fill="none" stroke-width="1" shape-rendering="crispEdges" stroke-dasharray="1 2"><path d="M120.5 56.0V631.0M127.5 56.0V631.0M134.5 56.0V631.0M149.5 56.0V631.0M156.5 56.0V631.0M164.5 56.0V631.0M171.5 56.0V631.0M185.5 56.0V631.0M193.5 56.0V631.0M200.5 56.0V631.0M207.5 56.0V631.0M222.5 56.0V631.0M229.5 56.0V631.0M236.5 56.0V631.0M243.5 56.0V631.0M258.5 56.0V631.0M265.5 56.0V631.0M273.5 56.0V631.0M280.5 56.0V631.0M294.5 56.0V631.0M302.5 56.0V631.0M309.5 56.0V631.0M316.5 56.0V631.0M331.5 56.0V631.0M338.5 56.0V631.0M345.5 56.0V631.0M352.5 56.0V631.0M367.5 56.0V631.0M374.5 56.0V631.0M382.5 56.0V631.0M389.5 56.0V631.0M403.5 56.0V631.0M411.5 56.0V631.0M418.5 56.0V631.0M425.5 56.0V631.0M440.5 56.0V631.0M447.5 56.0V631.0M454.5 56.0V631.0M461.5 56.0V631.0M476.5 56.0V631.0M483.5 56.0V631.0M491.5 56.0V631.0M498.5 56.0V631.0M512.5 56.0V631.0M520.5 56.0V631.0M527.5 56.0V631.0M534.5 56.0V631.0M549.5 56.0V631.0M556.5 56.0V631.0M563.5 56.0V631.0M570.5 56.0V631.0M585.5 56.0V631.0M592.5 56.0V631.0M600.5 56.0V631.0M607.5 56.0V631.0M621.5 56.0V631.0M629.5 56.0V631.0M636.5 56.0V631.0M643.5 56.0V631.0M658.5 56.0V631.0M665.5 56.0V631.0M672.5 56.0V631.0M679.5 56.0V631.0M694.5 56.0V631.0M701.5 56.0V631.0M709.5 56.0V631.0M716.5 56.0V631.0M730.5 56.0V631.0M738.5 56.0V631.0M745.5 56.0V631.0M752.5 56.0V631.0M767.5 56.0V631.0M774.5 56.0V631.0M781.5 56.0V631.0M788.5 56.0V631.0M803.5 56.0V631.0M810.5 56.0V631.0M817.5 56.0V631.0M825.5 56.0V631.0M839.5 56.0V631.0M847.5 56.0V631.0M854.5 56.0V631.0M861.5 56.0V631.0M876.5 56.0V631.0M883.5 56.0V631.0M890.5 56.0V631.0M897.5 56.0V631.0M912.5 56.0V631.0M919.5 56.0V631.0M926.5 56.0V631.0M934.5 56.0V631.0M948.5 56.0V631.0M956.5 56.0V631.0M963.5 56.0V631.0M970.5 56.0V631.0M985.5 56.0V631.0M992.5 56.0V631.0M999.5 56.0V631.0M1006.5 56.0V631.0M1021.5 56.0V631.0M1028.5 56.0V631.0M1035.5 56.0V631.0M1043.5 56.0V631.0M1057.5 56.0V631.0M1065.5 56.0V631.0M1072.5 56.0V631.0M1079.5 56.0V631.0M1094.5 56.0V631.0M1101.5 56.0V631.0M1108.5 56.0V631.0M1115.5 56.0V631.0M1130.5 56.0V631.0M1137.5 56.0V631.0M1144.5 56.0V631.0M1152.5 56.0V631.0M1166.5 56.0V631.0M1174.5 56.0V631.0M1181.5 56.0V631.0M1188.5 56.0V631.0M1203.5 56.0V631.0M1210.5 56.0V631.0M1217.5 56.0V631.0M1224.5 56.0V631.0M1239.5 56.0V631.0M1246.5 56.0V631.0M1253.5 56.0V631.0M1261.5 56.0V631.0M1275.5 56.0V631.0M1283.5 56.0V631.0M1290.5 56.0V631.0M1297.5 56.0V631.0M1312.5 56.0V631.0M1319.5 56.0V631.0M1326.5 56.0V631.0M1333.5 56.0V631.0M1348.5 56.0V631.0M1355.5 56.0V631.0M1362.5 56.0V631.0M1370.5 56.0V631.0M1384.5 56.0V631.0M1392.5 56.0V631.0M1399.5 56.0V631.0M1406.5 56.0V631.0M1421.5 56.0V631.0M1428.5 56.0V631.0M1435.5 56.0V631.0M1442.5 56.0V631.0M1457.5 56.0V631.0M1464.5 56.0V631.0M1471.5 56.0V631.0M116.0 617.5H1476.0M116.0 599.5H1476.0M116.0 580.5H1476.0M116.0 544.5H1476.0M116.0 526.5H1476.0M116.0 507.5H1476.0M116.0 471.5H1476.0M116.0 452.5H1476.0M116.0 434.5H1476.0M116.0 398.5H1476.0M116.0 379.5H1476.0M116.0 361.5H1476.0M116.0 324.5H1476.0M116.0 306.5H1476.0M116.0 288.5H1476.0M116.0 251.5H1476.0M116.0 233.5H1476.0M116.0 215.5H1476.0M116.0 178.5H1476.0M116.0 160.5H1476.0M116.0 142.5H1476.0M116.0 105.5H1476.0M116.0 87.5H1476.0M116.0 68.5H1476.0" stroke="#a0a0a4"/><path d="M142.5 56.0V631.0M178.5 56.0V631.0M214.5 56.0V631.0M251.5 56.0V631.0M287.5 56.0V631.0M323.5 56.0V631.0M360.5 56.0V631.0M396.5 56.0V631.0M432.5 56.0V631.0M469.5 56.0V631.0M505.5 56.0V631.0M541.5 56.0V631.0M578.5 56.0V631.0M614.5 56.0V631.0M650.5 56.0V631.0M687.5 56.0V631.0M723.5 56.0V631.0M759.5 56.0V631.0M832.5 56.0V631.0M868.5 56.0V631.0M905.5 56.0V631.0M941.5 56.0V631.0M977.5 56.0V631.0M1014.5 56.0V631.0M1050.5 56.0V631.0M1086.5 56.0V631.0M1123.5 56.0V631.0M1159.5 56.0V631.0M1195.5 56.0V631.0M1232.5 56.0V631.0M1268.5 56.0V631.0M1304.5 56.0V631.0M1341.5 56.0V631.0M1377.5 56.0V631.0M1413.5 56.0V631.0M1450.5 56.0V631.0M116.0 562.5H1476.0M116.0 489.5H1476.0M116.0 416.5H1476.0M116.0 270.5H1476.0M116.0 196.5H1476.0M116.0 123.5H1476.0" stroke="#000"/></g><g shape-rendering="crispEdges" fill="none" stroke="#000"><path d="M116.0 343.7H1476.0" stroke-width="1.4"/><path d="M796.5 56.0V631.0" stroke-width="1.3" stroke-dasharray="4 2.2"/></g><path d="M116.0 318.5H1476.0" stroke="#c41414" stroke-width="1.25" stroke-dasharray="4.6 2.2 1.2 2.2" fill="none" shape-rendering="crispEdges"/><path d="M116.0 368.5H1476.0" stroke="#c41414" stroke-width="1.25" stroke-dasharray="4.6 2.2 1.2 2.2" fill="none" shape-rendering="crispEdges"/><path d="M161.4 347.8L162.9 347.8L164.4 347.8L165.9 347.9L167.4 347.9L168.9 348.0L170.4 348.1L171.9 348.1L173.4 348.2L174.9 348.3L176.4 348.4L177.9 348.5L179.4 348.6L180.9 348.7L182.4 348.9L183.9 349.0L185.4 349.2L186.9 349.4L188.4 349.6L189.9 349.8L191.4 350.0L192.9 350.3L194.4 350.5L195.9 350.8L197.4 351.1L198.9 351.3L200.4 351.6L201.9 351.9L203.4 352.2L204.9 352.5L206.4 352.9L207.9 353.2L209.4 353.6L210.9 354.0L212.4 354.4L213.9 354.8L215.4 355.3L216.9 355.7L218.4 356.1L219.9 356.6L221.4 357.0L222.9 357.5L224.4 357.9L225.9 358.4L227.4 358.8L228.9 359.3L230.4 359.8L231.9 360.2L233.4 360.7L234.9 361.2L236.4 361.7L237.9 362.3L239.4 362.8L240.9 363.4L242.4 364.0L243.9 364.6L245.4 365.2L246.9 365.9L248.4 366.6L249.9 367.3L251.4 368.0L252.9 368.7L254.4 369.4L255.9 370.2L257.4 371.0L258.9 371.7L260.4 372.5L261.9 373.3L263.4 374.1L264.9 374.9L266.4 375.7L267.9 376.5L269.4 377.2L270.9 378.0L272.4 378.8L273.9 379.6L275.4 380.3L276.9 381.1L278.4 381.8L279.9 382.6L281.4 383.4L282.9 384.1L284.4 384.9L285.9 385.6L287.4 386.4L288.9 387.1L290.4 387.9L291.9 388.6L293.4 389.4L294.9 390.2L296.4 390.9L297.9 391.7L299.4 392.4L300.9 393.2L302.4 394.0L303.9 394.7L305.4 395.5L306.9 396.2L308.4 397.0L309.9 397.7L311.4 398.5L312.9 399.2L314.4 400.0L315.9 400.7L317.4 401.5L318.9 402.2L320.4 403.0L321.9 403.7L323.4 404.5L324.9 405.2L326.4 406.0L327.9 406.7L329.4 407.4L330.9 408.2L332.4 408.9L333.9 409.7L335.4 410.4L336.9 411.1L338.4 411.9L339.9 412.6L341.4 413.4L342.9 414.1L344.4 414.9L345.9 415.6L347.4 416.4L348.9 417.2L350.4 417.9L351.9 418.7L353.4 419.5L354.9 420.4L356.4 421.2L357.9 422.1L359.4 422.9L360.9 423.7L362.4 424.5L363.9 425.3L365.4 426.0L366.9 426.7L368.4 427.3L369.9 427.9L371.4 428.4L372.9 429.0L374.4 429.5L375.9 430.0L377.4 430.5L378.9 431.0L380.4 431.4L381.9 431.8L383.4 432.2L384.9 432.6L386.4 433.0L387.9 433.3L389.4 433.6L390.9 433.9L392.4 434.1L393.9 434.4L395.4 434.7L396.9 434.9L398.4 435.2L399.9 435.4L401.4 435.6L402.9 435.7L404.4 435.9L405.9 435.9L407.4 436.0L408.9 436.0L410.4 435.9L411.9 435.9L413.4 435.8L414.9 435.7L416.4 435.6L417.9 435.5L419.4 435.3L420.9 435.2L422.4 435.0L423.9 434.9L425.4 434.7L426.9 434.5L428.4 434.3L429.9 434.0L431.4 433.7L432.9 433.4L434.4 433.0L435.9 432.6L437.4 432.2L438.9 431.7L440.4 431.2L441.9 430.7L443.4 430.1L444.9 429.5L446.4 428.8L447.9 428.0L449.4 427.2L450.9 426.4L452.4 425.6L453.9 424.7L455.4 423.8L456.9 422.9L458.4 421.9L459.9 421.0L461.4 420.0L462.9 419.0L464.4 418.0L465.9 417.0L467.4 415.9L468.9 414.8L470.4 413.6L471.9 412.4L473.4 411.2L474.9 410.0L476.4 408.7L477.9 407.4L479.4 406.1L480.9 404.9L482.4 403.6L483.9 402.3L485.4 401.0L486.9 399.7L488.4 398.4L489.9 397.1L491.4 395.7L492.9 394.4L494.4 393.0L495.9 391.6L497.4 390.2L498.9 388.7L500.4 387.3L501.9 385.8L503.4 384.2L504.9 382.7L506.4 381.1L507.9 379.5L509.4 377.8L510.9 376.2L512.4 374.5L513.9 372.8L515.4 371.1L516.9 369.4L518.4 367.7L519.9 366.0L521.4 364.3L522.9 362.6L524.4 360.8L525.9 359.1L527.4 357.4L528.9 355.6L530.4 353.8L531.9 352.0L533.4 350.2L534.9 348.4L536.4 346.5L537.9 344.7L539.4 342.7L540.9 340.8L542.4 338.8L543.9 336.8L545.4 334.7L546.9 332.6L548.4 330.5L549.9 328.4L551.4 326.4L552.9 324.3L554.4 322.2L555.9 320.2L557.4 318.3L558.9 316.3L560.4 314.4L561.9 312.5L563.4 310.6L564.9 308.8L566.4 306.9L567.9 305.1L569.4 303.2L570.9 301.4L572.4 299.5L573.9 297.6L575.4 295.7L576.9 293.9L578.4 291.9L579.9 290.0L581.4 288.1L582.9 286.2L584.4 284.3L585.9 282.3L587.4 280.4L588.9 278.5L590.4 276.5L591.9 274.6L593.4 272.7L594.9 270.7L596.4 268.8L597.9 266.8L599.4 264.9L600.9 262.9L602.4 261.0L603.9 259.0L605.4 257.1L606.9 255.1L608.4 253.2L609.9 251.2L611.4 249.3L612.9 247.3L614.4 245.4L615.9 243.4L617.4 241.5L618.9 239.5L620.4 237.6L621.9 235.6L623.4 233.6L624.9 231.6L626.4 229.7L627.9 227.7L629.4 225.7L630.9 223.7L632.4 221.8L633.9 219.8L635.4 217.8L636.9 215.9L638.4 213.9L639.9 211.9L641.4 210.0L642.9 208.1L644.4 206.1L645.9 204.2L647.4 202.3L648.9 200.4L650.4 198.5L651.9 196.6L653.4 194.7L654.9 192.9L656.4 191.0L657.9 189.1L659.4 187.3L660.9 185.4L662.4 183.6L663.9 181.7L665.4 179.9L666.9 178.0L668.4 176.2L669.9 174.4L671.4 172.6L672.9 170.8L674.4 169.0L675.9 167.2L677.4 165.4L678.9 163.6L680.4 161.8L681.9 160.1L683.4 158.3L684.9 156.6L686.4 154.8L687.9 153.1L689.4 151.4L690.9 149.7L692.4 148.0L693.9 146.3L695.4 144.7L696.9 143.1L698.4 141.5L699.9 139.9L701.4 138.4L702.9 136.9L704.4 135.4L705.9 133.9L707.4 132.4L708.9 130.9L710.4 129.5L711.9 128.0L713.4 126.6L714.9 125.3L716.4 123.9L717.9 122.6L719.4 121.4L720.9 120.1L722.4 118.9L723.9 117.8L725.4 116.6L726.9 115.5L728.4 114.4L729.9 113.3L731.4 112.2L732.9 111.1L734.4 110.0L735.9 109.0L737.4 108.0L738.9 107.0L740.4 106.0L741.9 105.1L743.4 104.2L744.9 103.3L746.4 102.5L747.9 101.6L749.4 100.8L750.9 100.1L752.4 99.4L753.9 98.7L755.4 98.1L756.9 97.4L758.4 96.8L759.9 96.3L761.4 95.7L762.9 95.2L764.4 94.7L765.9 94.2L767.4 93.8L768.9 93.3L770.4 92.9L771.9 92.5L773.4 92.1L774.9 91.7L776.4 91.3L777.9 90.9L779.4 90.5L780.9 90.1L782.4 89.7L783.9 89.4L785.4 89.1L786.9 88.8L788.4 88.5L789.9 88.3L791.4 88.1L792.9 88.0L794.4 87.9L795.9 87.8L797.4 87.8L798.9 87.9L800.4 87.9L801.9 88.0L803.4 88.1L804.9 88.2L806.4 88.4L807.9 88.6L809.4 88.8L810.9 89.0L812.4 89.2L813.9 89.5L815.4 89.7L816.9 90.0L818.4 90.3L819.9 90.6L821.4 90.9L822.9 91.3L824.4 91.6L825.9 91.9L827.4 92.3L828.9 92.8L830.4 93.3L831.9 93.9L833.4 94.6L834.9 95.4L836.4 96.2L837.9 97.0L839.4 97.9L840.9 98.9L842.4 99.9L843.9 100.9L845.4 101.9L846.9 103.0L848.4 104.0L849.9 105.1L851.4 106.1L852.9 107.1L854.4 108.2L855.9 109.2L857.4 110.2L858.9 111.1L860.4 112.1L861.9 113.2L863.4 114.2L864.9 115.3L866.4 116.4L867.9 117.6L869.4 118.8L870.9 120.1L872.4 121.4L873.9 122.8L875.4 124.2L876.9 125.7L878.4 127.2L879.9 128.7L881.4 130.3L882.9 131.9L884.4 133.5L885.9 135.0L887.4 136.6L888.9 138.2L890.4 139.8L891.9 141.4L893.4 143.0L894.9 144.5L896.4 146.1L897.9 147.8L899.4 149.4L900.9 151.0L902.4 152.6L903.9 154.3L905.4 155.9L906.9 157.6L908.4 159.2L909.9 160.9L911.4 162.6L912.9 164.3L914.4 166.0L915.9 167.8L917.4 169.5L918.9 171.3L920.4 173.0L921.9 174.8L923.4 176.6L924.9 178.4L926.4 180.3L927.9 182.1L929.4 184.0L930.9 185.9L932.4 187.8L933.9 189.7L935.4 191.6L936.9 193.6L938.4 195.5L939.9 197.5L941.4 199.5L942.9 201.4L944.4 203.4L945.9 205.4L947.4 207.4L948.9 209.4L950.4 211.5L951.9 213.5L953.4 215.5L954.9 217.5L956.4 219.5L957.9 221.6L959.4 223.6L960.9 225.6L962.4 227.7L963.9 229.7L965.4 231.8L966.9 233.8L968.4 235.9L969.9 238.0L971.4 240.0L972.9 242.1L974.4 244.2L975.9 246.3L977.4 248.4L978.9 250.6L980.4 252.7L981.9 254.9L983.4 257.0L984.9 259.2L986.4 261.4L987.9 263.6L989.4 265.8L990.9 268.1L992.4 270.3L993.9 272.6L995.4 274.9L996.9 277.2L998.4 279.6L999.9 282.0L1001.4 284.3L1002.9 286.7L1004.4 289.1L1005.9 291.5L1007.4 293.9L1008.9 296.3L1010.4 298.7L1011.9 301.0L1013.4 303.4L1014.9 305.8L1016.4 308.1L1017.9 310.5L1019.4 312.8L1020.9 315.1L1022.4 317.4L1023.9 319.7L1025.4 322.0L1026.9 324.2L1028.4 326.5L1029.9 328.8L1031.4 331.1L1032.9 333.4L1034.4 335.7L1035.9 338.0L1037.4 340.3L1038.9 342.7L1040.4 345.0L1041.9 347.4L1043.4 349.8L1044.9 352.2L1046.4 354.6L1047.9 357.0L1049.4 359.4L1050.9 361.9L1052.4 364.3L1053.9 366.7L1055.4 369.1L1056.9 371.5L1058.4 374.0L1059.9 376.4L1061.4 378.9L1062.9 381.4L1064.4 383.9L1065.9 386.3L1067.4 388.7L1068.9 391.1L1070.4 393.4L1071.9 395.6L1073.4 397.8L1074.9 399.9L1076.4 402.0L1077.9 404.0L1079.4 406.1L1080.9 408.1L1082.4 410.0L1083.9 411.9L1085.4 413.7L1086.9 415.5L1088.4 417.3L1089.9 419.0L1091.4 420.7L1092.9 422.3L1094.4 423.9L1095.9 425.4L1097.4 427.0L1098.9 428.5L1100.4 429.9L1101.9 431.3L1103.4 432.6L1104.9 433.9L1106.4 435.2L1107.9 436.3L1109.4 437.5L1110.9 438.6L1112.4 439.7L1113.9 440.7L1115.4 441.8L1116.9 442.8L1118.4 443.7L1119.9 444.7L1121.4 445.7L1122.9 446.6L1124.4 447.6L1125.9 448.5L1127.4 449.5L1128.9 450.5L1130.4 451.4L1131.9 452.3L1133.4 453.1L1134.9 453.9L1136.4 454.6L1137.9 455.2L1139.4 455.8L1140.9 456.4L1142.4 456.9L1143.9 457.3L1145.4 457.8L1146.9 458.1L1148.4 458.5L1149.9 458.8L1151.4 459.0L1152.9 459.3L1154.4 459.5L1155.9 459.8L1157.4 460.0L1158.9 460.2L1160.4 460.3L1161.9 460.4L1163.4 460.5L1164.9 460.6L1166.4 460.6L1167.9 460.5L1169.4 460.5L1170.9 460.4L1172.4 460.2L1173.9 460.1L1175.4 459.9L1176.9 459.7L1178.4 459.5L1179.9 459.3L1181.4 459.1L1182.9 458.8L1184.4 458.5L1185.9 458.2L1187.4 457.8L1188.9 457.4L1190.4 456.9L1191.9 456.4L1193.4 455.9L1194.9 455.4L1196.4 454.8L1197.9 454.2L1199.4 453.6L1200.9 453.0L1202.4 452.3L1203.9 451.5L1205.4 450.8L1206.9 450.0L1208.4 449.1L1209.9 448.3L1211.4 447.4L1212.9 446.5L1214.4 445.6L1215.9 444.7L1217.4 443.8L1218.9 442.9L1220.4 442.0L1221.9 441.1L1223.4 440.1L1224.9 439.2L1226.4 438.2L1227.9 437.2L1229.4 436.2L1230.9 435.2L1232.4 434.2L1233.9 433.1L1235.4 432.1L1236.9 431.0L1238.4 429.9L1239.9 428.8L1241.4 427.7L1242.9 426.5L1244.4 425.3L1245.9 424.1L1247.4 422.9L1248.9 421.7L1250.4 420.5L1251.9 419.2L1253.4 418.0L1254.9 416.8L1256.4 415.6L1257.9 414.4L1259.4 413.2L1260.9 411.9L1262.4 410.7L1263.9 409.5L1265.4 408.3L1266.9 407.0L1268.4 405.8L1269.9 404.6L1271.4 403.5L1272.9 402.3L1274.4 401.2L1275.9 400.0L1277.4 398.9L1278.9 397.7L1280.4 396.6L1281.9 395.5L1283.4 394.4L1284.9 393.4L1286.4 392.3L1287.9 391.3L1289.4 390.3L1290.9 389.3L1292.4 388.3L1293.9 387.3L1295.4 386.4L1296.9 385.5L1298.4 384.5L1299.9 383.7L1301.4 382.8L1302.9 381.9L1304.4 381.1L1305.9 380.3L1307.4 379.6L1308.9 378.8L1310.4 378.1L1311.9 377.4L1313.4 376.7L1314.9 376.0L1316.4 375.4L1317.9 374.8L1319.4 374.2L1320.9 373.7L1322.4 373.2L1323.9 372.6L1325.4 372.1L1326.9 371.7L1328.4 371.3L1329.9 370.9L1331.4 370.6L1332.9 370.3L1334.4 370.1L1335.9 369.8L1337.4 369.6L1338.9 369.3L1340.4 369.1L1341.9 368.9L1343.4 368.7L1344.9 368.6L1346.4 368.4L1347.9 368.3L1349.4 368.3L1350.9 368.2L1352.4 368.2L1353.9 368.3L1355.4 368.4L1356.9 368.6L1358.4 368.8L1359.9 369.0L1361.4 369.3L1362.9 369.5L1364.4 369.8L1365.9 370.1L1367.4 370.5L1368.9 370.8L1370.4 371.3L1371.9 371.7L1373.4 372.2L1374.9 372.7L1376.4 373.3L1377.9 373.9L1379.4 374.5L1380.9 375.1L1382.4 375.8L1383.9 376.4L1385.4 377.1L1386.9 377.8L1388.4 378.4L1389.9 379.0L1391.4 379.7L1392.9 380.3L1394.4 380.9L1395.9 381.6L1397.4 382.2L1398.9 382.9L1400.4 383.5L1401.9 384.1L1403.4 384.7L1404.9 385.3L1406.4 385.9L1407.9 386.5L1409.4 387.0L1410.9 387.4L1412.4 387.8L1413.9 388.2L1415.4 388.6L1416.9 388.9L1418.4 389.2L1419.9 389.4L1421.4 389.5L1422.9 389.6L1424.4 389.7L1425.9 389.7L1427.4 389.8L1428.9 389.8" fill="none" stroke="#505050" stroke-width="1.5" stroke-linejoin="round"/><path d="M240.9 363.4L242.4 364.0L243.9 364.6L245.4 365.2L246.9 365.9L248.4 366.6L249.9 367.3L251.4 368.0L252.9 368.7L254.4 369.4L255.9 370.2L257.4 371.0L258.9 371.7L260.4 372.5L261.9 373.3L263.4 374.1L264.9 374.9L266.4 375.7L267.9 376.5L269.4 377.2L270.9 378.0L272.4 378.8L273.9 379.6L275.4 380.3L276.9 381.1L278.4 381.8L279.9 382.6L281.4 383.4L282.9 384.1L284.4 384.9L285.9 385.6L287.4 386.4L288.9 387.1L290.4 387.9L291.9 388.6L293.4 389.4L294.9 390.2L296.4 390.9L297.9 391.7L299.4 392.4L300.9 393.2L302.4 394.0L303.9 394.7L305.4 395.5L306.9 396.2L308.4 397.0L309.9 397.7L311.4 398.5L312.9 399.2L314.4 400.0L315.9 400.7L317.4 401.5L318.9 402.2L320.4 403.0L321.9 403.7L323.4 404.5L324.9 405.2L326.4 406.0L327.9 406.7L329.4 407.4L330.9 408.2L332.4 408.9L333.9 409.7L335.4 410.4L336.9 411.1L338.4 411.9L339.9 412.6L341.4 413.4L342.9 414.1L344.4 414.9L345.9 415.6L347.4 416.4L348.9 417.2L350.4 417.9L351.9 418.7L353.4 419.5L354.9 420.4L356.4 421.2L357.9 422.1L359.4 422.9L360.9 423.7L362.4 424.5L363.9 425.3L365.4 426.0L366.9 426.7" fill="none" stroke="#ffa500" stroke-width="3.8" stroke-linejoin="round" stroke-linecap="butt"/><path d="M440.4 431.2L441.9 430.7L443.4 430.1L444.9 429.5L446.4 428.8L447.9 428.0L449.4 427.2L450.9 426.4L452.4 425.6L453.9 424.7L455.4 423.8L456.9 422.9L458.4 421.9L459.9 421.0L461.4 420.0L462.9 419.0L464.4 418.0L465.9 417.0L467.4 415.9L468.9 414.8L470.4 413.6L471.9 412.4L473.4 411.2L474.9 410.0L476.4 408.7L477.9 407.4L479.4 406.1L480.9 404.9L482.4 403.6L483.9 402.3L485.4 401.0L486.9 399.7L488.4 398.4L489.9 397.1L491.4 395.7L492.9 394.4L494.4 393.0L495.9 391.6L497.4 390.2L498.9 388.7L500.4 387.3L501.9 385.8L503.4 384.2L504.9 382.7L506.4 381.1L507.9 379.5L509.4 377.8L510.9 376.2L512.4 374.5L513.9 372.8L515.4 371.1L516.9 369.4L518.4 367.7L519.9 366.0L521.4 364.3L522.9 362.6L524.4 360.8L525.9 359.1L527.4 357.4L528.9 355.6L530.4 353.8L531.9 352.0L533.4 350.2L534.9 348.4L536.4 346.5L537.9 344.7L539.4 342.7L540.9 340.8L542.4 338.8L543.9 336.8L545.4 334.7L546.9 332.6L548.4 330.5L549.9 328.4L551.4 326.4L552.9 324.3L554.4 322.2L555.9 320.2L557.4 318.3L558.9 316.3L560.4 314.4L561.9 312.5L563.4 310.6L564.9 308.8L566.4 306.9L567.9 305.1L569.4 303.2L570.9 301.4L572.4 299.5L573.9 297.6L575.4 295.7L576.9 293.9L578.4 291.9L579.9 290.0L581.4 288.1L582.9 286.2L584.4 284.3L585.9 282.3L587.4 280.4L588.9 278.5L590.4 276.5L591.9 274.6L593.4 272.7L594.9 270.7L596.4 268.8L597.9 266.8L599.4 264.9L600.9 262.9L602.4 261.0L603.9 259.0L605.4 257.1L606.9 255.1L608.4 253.2L609.9 251.2L611.4 249.3L612.9 247.3L614.4 245.4L615.9 243.4L617.4 241.5L618.9 239.5L620.4 237.6L621.9 235.6L623.4 233.6L624.9 231.6L626.4 229.7L627.9 227.7L629.4 225.7L630.9 223.7L632.4 221.8L633.9 219.8L635.4 217.8L636.9 215.9L638.4 213.9L639.9 211.9L641.4 210.0L642.9 208.1L644.4 206.1L645.9 204.2L647.4 202.3L648.9 200.4L650.4 198.5L651.9 196.6L653.4 194.7L654.9 192.9L656.4 191.0L657.9 189.1L659.4 187.3L660.9 185.4L662.4 183.6L663.9 181.7L665.4 179.9L666.9 178.0L668.4 176.2L669.9 174.4L671.4 172.6L672.9 170.8L674.4 169.0L675.9 167.2L677.4 165.4L678.9 163.6L680.4 161.8L681.9 160.1L683.4 158.3L684.9 156.6L686.4 154.8L687.9 153.1L689.4 151.4L690.9 149.7L692.4 148.0L693.9 146.3L695.4 144.7L696.9 143.1L698.4 141.5L699.9 139.9L701.4 138.4L702.9 136.9L704.4 135.4L705.9 133.9L707.4 132.4L708.9 130.9L710.4 129.5L711.9 128.0L713.4 126.6L714.9 125.3L716.4 123.9L717.9 122.6L719.4 121.4L720.9 120.1L722.4 118.9L723.9 117.8L725.4 116.6L726.9 115.5L728.4 114.4L729.9 113.3L731.4 112.2L732.9 111.1L734.4 110.0L735.9 109.0L737.4 108.0L738.9 107.0L740.4 106.0L741.9 105.1L743.4 104.2L744.9 103.3L746.4 102.5L747.9 101.6L749.4 100.8L750.9 100.1L752.4 99.4L753.9 98.7L755.4 98.1L756.9 97.4L758.4 96.8L759.9 96.3L761.4 95.7L762.9 95.2L764.4 94.7L765.9 94.2L767.4 93.8L768.9 93.3" fill="none" stroke="#ffa500" stroke-width="3.8" stroke-linejoin="round" stroke-linecap="butt"/><path d="M827.4 92.3L828.9 92.8L830.4 93.3L831.9 93.9L833.4 94.6L834.9 95.4L836.4 96.2L837.9 97.0L839.4 97.9L840.9 98.9L842.4 99.9L843.9 100.9L845.4 101.9L846.9 103.0L848.4 104.0L849.9 105.1L851.4 106.1L852.9 107.1L854.4 108.2L855.9 109.2L857.4 110.2L858.9 111.1L860.4 112.1L861.9 113.2L863.4 114.2L864.9 115.3L866.4 116.4L867.9 117.6L869.4 118.8L870.9 120.1L872.4 121.4L873.9 122.8L875.4 124.2L876.9 125.7L878.4 127.2L879.9 128.7L881.4 130.3L882.9 131.9L884.4 133.5L885.9 135.0L887.4 136.6L888.9 138.2L890.4 139.8L891.9 141.4L893.4 143.0L894.9 144.5L896.4 146.1L897.9 147.8L899.4 149.4L900.9 151.0L902.4 152.6L903.9 154.3L905.4 155.9L906.9 157.6L908.4 159.2L909.9 160.9L911.4 162.6L912.9 164.3L914.4 166.0L915.9 167.8L917.4 169.5L918.9 171.3L920.4 173.0L921.9 174.8L923.4 176.6L924.9 178.4L926.4 180.3L927.9 182.1L929.4 184.0L930.9 185.9L932.4 187.8L933.9 189.7L935.4 191.6L936.9 193.6L938.4 195.5L939.9 197.5L941.4 199.5L942.9 201.4L944.4 203.4L945.9 205.4L947.4 207.4L948.9 209.4L950.4 211.5L951.9 213.5L953.4 215.5L954.9 217.5L956.4 219.5L957.9 221.6L959.4 223.6L960.9 225.6L962.4 227.7L963.9 229.7L965.4 231.8L966.9 233.8L968.4 235.9L969.9 238.0L971.4 240.0L972.9 242.1L974.4 244.2L975.9 246.3L977.4 248.4L978.9 250.6L980.4 252.7L981.9 254.9L983.4 257.0L984.9 259.2L986.4 261.4L987.9 263.6L989.4 265.8L990.9 268.1L992.4 270.3L993.9 272.6L995.4 274.9L996.9 277.2L998.4 279.6L999.9 282.0L1001.4 284.3L1002.9 286.7L1004.4 289.1L1005.9 291.5L1007.4 293.9L1008.9 296.3L1010.4 298.7L1011.9 301.0L1013.4 303.4L1014.9 305.8L1016.4 308.1L1017.9 310.5L1019.4 312.8L1020.9 315.1L1022.4 317.4L1023.9 319.7L1025.4 322.0L1026.9 324.2L1028.4 326.5L1029.9 328.8L1031.4 331.1L1032.9 333.4L1034.4 335.7L1035.9 338.0L1037.4 340.3L1038.9 342.7L1040.4 345.0L1041.9 347.4L1043.4 349.8L1044.9 352.2L1046.4 354.6L1047.9 357.0L1049.4 359.4L1050.9 361.9L1052.4 364.3L1053.9 366.7L1055.4 369.1L1056.9 371.5L1058.4 374.0L1059.9 376.4L1061.4 378.9L1062.9 381.4L1064.4 383.9L1065.9 386.3L1067.4 388.7L1068.9 391.1L1070.4 393.4L1071.9 395.6L1073.4 397.8L1074.9 399.9L1076.4 402.0L1077.9 404.0L1079.4 406.1L1080.9 408.1L1082.4 410.0L1083.9 411.9L1085.4 413.7L1086.9 415.5L1088.4 417.3L1089.9 419.0L1091.4 420.7L1092.9 422.3L1094.4 423.9L1095.9 425.4L1097.4 427.0L1098.9 428.5L1100.4 429.9L1101.9 431.3L1103.4 432.6L1104.9 433.9L1106.4 435.2L1107.9 436.3L1109.4 437.5L1110.9 438.6L1112.4 439.7L1113.9 440.7L1115.4 441.8L1116.9 442.8L1118.4 443.7L1119.9 444.7L1121.4 445.7L1122.9 446.6L1124.4 447.6L1125.9 448.5L1127.4 449.5L1128.9 450.5L1130.4 451.4L1131.9 452.3L1133.4 453.1L1134.9 453.9L1136.4 454.6L1137.9 455.2" fill="none" stroke="#ffa500" stroke-width="3.8" stroke-linejoin="round" stroke-linecap="butt"/><path d="M1197.9 454.2L1199.4 453.6L1200.9 453.0L1202.4 452.3L1203.9 451.5L1205.4 450.8L1206.9 450.0L1208.4 449.1L1209.9 448.3L1211.4 447.4L1212.9 446.5L1214.4 445.6L1215.9 444.7L1217.4 443.8L1218.9 442.9L1220.4 442.0L1221.9 441.1L1223.4 440.1L1224.9 439.2L1226.4 438.2L1227.9 437.2L1229.4 436.2L1230.9 435.2L1232.4 434.2L1233.9 433.1L1235.4 432.1L1236.9 431.0L1238.4 429.9L1239.9 428.8L1241.4 427.7L1242.9 426.5L1244.4 425.3L1245.9 424.1L1247.4 422.9L1248.9 421.7L1250.4 420.5L1251.9 419.2L1253.4 418.0L1254.9 416.8L1256.4 415.6L1257.9 414.4L1259.4 413.2L1260.9 411.9L1262.4 410.7L1263.9 409.5L1265.4 408.3L1266.9 407.0L1268.4 405.8L1269.9 404.6L1271.4 403.5L1272.9 402.3L1274.4 401.2L1275.9 400.0L1277.4 398.9L1278.9 397.7L1280.4 396.6L1281.9 395.5L1283.4 394.4L1284.9 393.4L1286.4 392.3L1287.9 391.3L1289.4 390.3L1290.9 389.3L1292.4 388.3L1293.9 387.3L1295.4 386.4L1296.9 385.5L1298.4 384.5L1299.9 383.7L1301.4 382.8L1302.9 381.9L1304.4 381.1L1305.9 380.3L1307.4 379.6L1308.9 378.8L1310.4 378.1L1311.9 377.4L1313.4 376.7L1314.9 376.0L1316.4 375.4L1317.9 374.8" fill="none" stroke="#ffa500" stroke-width="3.8" stroke-linejoin="round" stroke-linecap="butt"/><path d="M1373.4 372.2L1374.9 372.7L1376.4 373.3L1377.9 373.9L1379.4 374.5L1380.9 375.1L1382.4 375.8L1383.9 376.4L1385.4 377.1L1386.9 377.8L1388.4 378.4L1389.9 379.0L1391.4 379.7L1392.9 380.3L1394.4 380.9L1395.9 381.6L1397.4 382.2L1398.9 382.9L1400.4 383.5L1401.9 384.1L1403.4 384.7L1404.9 385.3L1406.4 385.9L1407.9 386.5L1409.4 387.0L1410.9 387.4L1412.4 387.8" fill="none" stroke="#ffa500" stroke-width="3.8" stroke-linejoin="round" stroke-linecap="butt"/><g stroke="#000" fill="none" shape-rendering="crispEdges"><path d="M111.7 60.0V626.0" stroke-width="1.5"/><path d="M111.7 617.5h-4.8M111.7 599.5h-6.8M111.7 580.5h-4.8M111.7 562.5h-8.8M111.7 544.5h-4.8M111.7 526.5h-6.8M111.7 507.5h-4.8M111.7 489.5h-8.8M111.7 471.5h-4.8M111.7 452.5h-6.8M111.7 434.5h-4.8M111.7 416.5h-8.8M111.7 398.5h-4.8M111.7 379.5h-6.8M111.7 361.5h-4.8M111.7 343.5h-8.8M111.7 324.5h-4.8M111.7 306.5h-6.8M111.7 288.5h-4.8M111.7 270.5h-8.8M111.7 251.5h-4.8M111.7 233.5h-6.8M111.7 215.5h-4.8M111.7 196.5h-8.8M111.7 178.5h-4.8M111.7 160.5h-6.8M111.7 142.5h-4.8M111.7 123.5h-8.8M111.7 105.5h-4.8M111.7 87.5h-6.8M111.7 68.5h-4.8" stroke-width="1.3"/><path d="M120.0 635.7H1472.0" stroke-width="1.4"/><path d="M120.5 635.7v3.4M127.5 635.7v3.4M134.5 635.7v3.4M142.5 635.7v7.2M149.5 635.7v3.4M156.5 635.7v3.4M164.5 635.7v3.4M171.5 635.7v3.4M178.5 635.7v7.2M185.5 635.7v3.4M193.5 635.7v3.4M200.5 635.7v3.4M207.5 635.7v3.4M214.5 635.7v7.2M222.5 635.7v3.4M229.5 635.7v3.4M236.5 635.7v3.4M243.5 635.7v3.4M251.5 635.7v7.2M258.5 635.7v3.4M265.5 635.7v3.4M273.5 635.7v3.4M280.5 635.7v3.4M287.5 635.7v7.2M294.5 635.7v3.4M302.5 635.7v3.4M309.5 635.7v3.4M316.5 635.7v3.4M323.5 635.7v7.2M331.5 635.7v3.4M338.5 635.7v3.4M345.5 635.7v3.4M352.5 635.7v3.4M360.5 635.7v7.2M367.5 635.7v3.4M374.5 635.7v3.4M382.5 635.7v3.4M389.5 635.7v3.4M396.5 635.7v7.2M403.5 635.7v3.4M411.5 635.7v3.4M418.5 635.7v3.4M425.5 635.7v3.4M432.5 635.7v7.2M440.5 635.7v3.4M447.5 635.7v3.4M454.5 635.7v3.4M461.5 635.7v3.4M469.5 635.7v7.2M476.5 635.7v3.4M483.5 635.7v3.4M491.5 635.7v3.4M498.5 635.7v3.4M505.5 635.7v7.2M512.5 635.7v3.4M520.5 635.7v3.4M527.5 635.7v3.4M534.5 635.7v3.4M541.5 635.7v7.2M549.5 635.7v3.4M556.5 635.7v3.4M563.5 635.7v3.4M570.5 635.7v3.4M578.5 635.7v7.2M585.5 635.7v3.4M592.5 635.7v3.4M600.5 635.7v3.4M607.5 635.7v3.4M614.5 635.7v7.2M621.5 635.7v3.4M629.5 635.7v3.4M636.5 635.7v3.4M643.5 635.7v3.4M650.5 635.7v7.2M658.5 635.7v3.4M665.5 635.7v3.4M672.5 635.7v3.4M679.5 635.7v3.4M687.5 635.7v7.2M694.5 635.7v3.4M701.5 635.7v3.4M709.5 635.7v3.4M716.5 635.7v3.4M723.5 635.7v7.2M730.5 635.7v3.4M738.5 635.7v3.4M745.5 635.7v3.4M752.5 635.7v3.4M759.5 635.7v7.2M767.5 635.7v3.4M774.5 635.7v3.4M781.5 635.7v3.4M788.5 635.7v3.4M796.5 635.7v7.2M803.5 635.7v3.4M810.5 635.7v3.4M817.5 635.7v3.4M825.5 635.7v3.4M832.5 635.7v7.2M839.5 635.7v3.4M847.5 635.7v3.4M854.5 635.7v3.4M861.5 635.7v3.4M868.5 635.7v7.2M876.5 635.7v3.4M883.5 635.7v3.4M890.5 635.7v3.4M897.5 635.7v3.4M905.5 635.7v7.2M912.5 635.7v3.4M919.5 635.7v3.4M926.5 635.7v3.4M934.5 635.7v3.4M941.5 635.7v7.2M948.5 635.7v3.4M956.5 635.7v3.4M963.5 635.7v3.4M970.5 635.7v3.4M977.5 635.7v7.2M985.5 635.7v3.4M992.5 635.7v3.4M999.5 635.7v3.4M1006.5 635.7v3.4M1014.5 635.7v7.2M1021.5 635.7v3.4M1028.5 635.7v3.4M1035.5 635.7v3.4M1043.5 635.7v3.4M1050.5 635.7v7.2M1057.5 635.7v3.4M1065.5 635.7v3.4M1072.5 635.7v3.4M1079.5 635.7v3.4M1086.5 635.7v7.2M1094.5 635.7v3.4M1101.5 635.7v3.4M1108.5 635.7v3.4M1115.5 635.7v3.4M1123.5 635.7v7.2M1130.5 635.7v3.4M1137.5 635.7v3.4M1144.5 635.7v3.4M1152.5 635.7v3.4M1159.5 635.7v7.2M1166.5 635.7v3.4M1174.5 635.7v3.4M1181.5 635.7v3.4M1188.5 635.7v3.4M1195.5 635.7v7.2M1203.5 635.7v3.4M1210.5 635.7v3.4M1217.5 635.7v3.4M1224.5 635.7v3.4M1232.5 635.7v7.2M1239.5 635.7v3.4M1246.5 635.7v3.4M1253.5 635.7v3.4M1261.5 635.7v3.4M1268.5 635.7v7.2M1275.5 635.7v3.4M1283.5 635.7v3.4M1290.5 635.7v3.4M1297.5 635.7v3.4M1304.5 635.7v7.2M1312.5 635.7v3.4M1319.5 635.7v3.4M1326.5 635.7v3.4M1333.5 635.7v3.4M1341.5 635.7v7.2M1348.5 635.7v3.4M1355.5 635.7v3.4M1362.5 635.7v3.4M1370.5 635.7v3.4M1377.5 635.7v7.2M1384.5 635.7v3.4M1392.5 635.7v3.4M1399.5 635.7v3.4M1406.5 635.7v3.4M1413.5 635.7v7.2M1421.5 635.7v3.4M1428.5 635.7v3.4M1435.5 635.7v3.4M1442.5 635.7v3.4M1450.5 635.7v7.2M1457.5 635.7v3.4M1464.5 635.7v3.4M1471.5 635.7v3.4" stroke-width="1.3"/></g></svg>
<span class="t" style="font-size:28.5px;line-height:28.5px;color:#000;left:552.64px;top:1039px;transform:scaleX(0.9562);">600</span>
<span class="t" style="font-size:28.5px;line-height:28.5px;color:#000;left:553.60px;top:1112px;transform:scaleX(0.9357);">400</span>
<span class="t" style="font-size:28.5px;line-height:28.5px;color:#000;left:552.64px;top:1186px;transform:scaleX(0.9562);">200</span>
<span class="t" style="font-size:28.5px;line-height:28.5px;color:#000;left:583.80px;top:1259px;transform:scaleX(0.9000);">0</span>
<span class="t" style="font-size:28.5px;line-height:28.5px;color:#000;left:543.34px;top:1332px;transform:scaleX(0.9603);">-200</span>
<span class="t" style="font-size:28.5px;line-height:28.5px;color:#000;left:543.34px;top:1405px;transform:scaleX(0.9603);">-400</span>
<span class="t" style="font-size:28.5px;line-height:28.5px;color:#000;left:543.34px;top:1478px;transform:scaleX(0.9603);">-600</span>
<span class="t" style="font-size:28.5px;line-height:28.5px;color:#000;left:614.66px;top:1575px;transform:scaleX(0.9422);">-180</span>
<span class="t" style="font-size:28.5px;line-height:28.5px;color:#000;left:650.99px;top:1575px;transform:scaleX(0.9422);">-170</span>
<span class="t" style="font-size:28.5px;line-height:28.5px;color:#000;left:687.33px;top:1575px;transform:scaleX(0.9422);">-160</span>
<span class="t" style="font-size:28.5px;line-height:28.5px;color:#000;left:723.66px;top:1575px;transform:scaleX(0.9422);">-150</span>
<span class="t" style="font-size:28.5px;line-height:28.5px;color:#000;left:759.99px;top:1575px;transform:scaleX(0.9422);">-140</span>
<span class="t" style="font-size:28.5px;line-height:28.5px;color:#000;left:796.32px;top:1575px;transform:scaleX(0.9422);">-130</span>
<span class="t" style="font-size:28.5px;line-height:28.5px;color:#000;left:832.66px;top:1575px;transform:scaleX(0.9422);">-120</span>
<span class="t" style="font-size:28.5px;line-height:28.5px;color:#000;left:868.95px;top:1575px;transform:scaleX(0.9797);">-110</span>
<span class="t" style="font-size:28.5px;line-height:28.5px;color:#000;left:905.32px;top:1575px;transform:scaleX(0.9422);">-100</span>
<span class="t" style="font-size:28.5px;line-height:28.5px;color:#000;left:949.16px;top:1575px;transform:scaleX(0.9405);">-90</span>
<span class="t" style="font-size:28.5px;line-height:28.5px;color:#000;left:985.49px;top:1575px;transform:scaleX(0.9405);">-80</span>
<span class="t" style="font-size:28.5px;line-height:28.5px;color:#000;left:1021.83px;top:1575px;transform:scaleX(0.9405);">-70</span>
<span class="t" style="font-size:28.5px;line-height:28.5px;color:#000;left:1058.16px;top:1575px;transform:scaleX(0.9405);">-60</span>
<span class="t" style="font-size:28.5px;line-height:28.5px;color:#000;left:1094.49px;top:1575px;transform:scaleX(0.9405);">-50</span>
<span class="t" style="font-size:28.5px;line-height:28.5px;color:#000;left:1130.83px;top:1575px;transform:scaleX(0.9405);">-40</span>
<span class="t" style="font-size:28.5px;line-height:28.5px;color:#000;left:1167.16px;top:1575px;transform:scaleX(0.9405);">-30</span>
<span class="t" style="font-size:28.5px;line-height:28.5px;color:#000;left:1203.49px;top:1575px;transform:scaleX(0.9405);">-20</span>
<span class="t" style="font-size:28.5px;line-height:28.5px;color:#000;left:1239.83px;top:1575px;transform:scaleX(0.9405);">-10</span>
<span class="t" style="font-size:28.5px;line-height:28.5px;color:#000;left:1288.40px;top:1575px;transform:scaleX(0.9000);">0</span>
<span class="t" style="font-size:28.5px;line-height:28.5px;color:#000;left:1315.88px;top:1575px;transform:scaleX(0.9775);">10</span>
<span class="t" style="font-size:28.5px;line-height:28.5px;color:#000;left:1353.22px;top:1575px;transform:scaleX(0.9447);">20</span>
<span class="t" style="font-size:28.5px;line-height:28.5px;color:#000;left:1389.56px;top:1575px;transform:scaleX(0.9447);">30</span>
<span class="t" style="font-size:28.5px;line-height:28.5px;color:#000;left:1426.83px;top:1575px;transform:scaleX(0.9141);">40</span>
<span class="t" style="font-size:28.5px;line-height:28.5px;color:#000;left:1462.22px;top:1575px;transform:scaleX(0.9447);">50</span>
<span class="t" style="font-size:28.5px;line-height:28.5px;color:#000;left:1498.56px;top:1575px;transform:scaleX(0.9447);">60</span>
<span class="t" style="font-size:28.5px;line-height:28.5px;color:#000;left:1534.89px;top:1575px;transform:scaleX(0.9447);">70</span>
<span class="t" style="font-size:28.5px;line-height:28.5px;color:#000;left:1571.22px;top:1575px;transform:scaleX(0.9447);">80</span>
<span class="t" style="font-size:28.5px;line-height:28.5px;color:#000;left:1607.55px;top:1575px;transform:scaleX(0.9447);">90</span>
<span class="t" style="font-size:28.5px;line-height:28.5px;color:#000;left:1635.40px;top:1575px;transform:scaleX(0.9664);">100</span>
<span class="t" style="font-size:28.5px;line-height:28.5px;color:#000;left:1671.64px;top:1575px;transform:scaleX(1.0144);">110</span>
<span class="t" style="font-size:28.5px;line-height:28.5px;color:#000;left:1708.07px;top:1575px;transform:scaleX(0.9664);">120</span>
<span class="t" style="font-size:28.5px;line-height:28.5px;color:#000;left:1744.40px;top:1575px;transform:scaleX(0.9664);">130</span>
<span class="t" style="font-size:28.5px;line-height:28.5px;color:#000;left:1780.73px;top:1575px;transform:scaleX(0.9664);">140</span>
<span class="t" style="font-size:28.5px;line-height:28.5px;color:#000;left:1817.07px;top:1575px;transform:scaleX(0.9664);">150</span>
<span class="t" style="font-size:28.5px;line-height:28.5px;color:#000;left:1853.40px;top:1575px;transform:scaleX(0.9664);">160</span>
<span class="t" style="font-size:28.5px;line-height:28.5px;color:#000;left:1889.73px;top:1575px;transform:scaleX(0.9664);">170</span>
<span class="t" style="font-size:28.5px;line-height:28.5px;color:#000;left:1926.07px;top:1575px;transform:scaleX(0.9664);">180</span>
<span class="t" style="font-size:37.5px;line-height:37.5px;color:#000;font-weight:700;-webkit-text-stroke:0.7px #000;left:1058.18px;top:939px;transform:scaleX(1.0580);">Profile of wavefront error</span>
<span class="t" style="font-size:32px;line-height:32px;color:#000;font-weight:700;-webkit-text-stroke:0.6px #000;left:1205.42px;top:1607px;transform:scaleX(1.0418);">Radius mm</span>
<span class="t" style="font-size:32px;line-height:32px;color:#000;font-weight:700;-webkit-text-stroke:0.6px #000;left:533.50px;top:1405.41px;transform-origin:0 27.09px;transform:rotate(-90deg) translateX(-2.11px) scaleX(1.0542);">Error in nanometers</span>
<span class="t" style="font-size:30.5px;line-height:30.5px;color:#000;left:808.56px;top:997px;transform:scaleX(1.0429);">Surface Smoothing diameter</span>
<span class="t" style="font-size:30.5px;line-height:30.5px;color:#000;left:1232.84px;top:997px;transform:scaleX(1.0583);">20.00% of surface diameter</span>
<span class="t" style="font-size:30.5px;line-height:30.5px;color:#000;left:1656.23px;top:997px;transform:scaleX(1.0728);">70.4 mm</span>
<span class="t" style="font-size:22px;line-height:22px;color:#dc0a14;left:1757.23px;top:1223px;transform:scaleX(0.9730);">1/8 wave on wavefront</span>
<span class="t" style="font-size:22px;line-height:22px;color:#000;left:1923.00px;top:1248px;transform:scaleX(1.0047);">y = 0</span>
<span class="t" style="font-size:22px;line-height:22px;color:#dc0a14;left:1749.80px;top:1273px;transform:scaleX(0.9743);">-1/8 wave on wavefront</span>
<div style="left:2070px;top:690px;width:1px;height:1009.5px;background:#ffffff;"></div>
<svg style="left:0px;top:0px;left:0;top:0;" width="2080" height="700" viewBox="0 0 2080 700"><path d="M2071 132.5L2048.5 141.0Q2044.5 142.5 2044.5 146.5V348.5Q2044.5 352.5 2048.5 354.0L2071 362.5" fill="#f0f0f0" stroke="#4a4a4a" stroke-width="1.1"/><path d="M2071 364.5L2048.5 373.0Q2044.5 374.5 2044.5 378.5V433.5Q2044.5 437.5 2048.5 439.0L2071 447.5" fill="#f0f0f0" stroke="#4a4a4a" stroke-width="1.1"/><path d="M2071 449L2048.5 457.5Q2044.5 459 2044.5 463V556Q2044.5 560 2048.5 561.5L2071 570" fill="#f0f0f0" stroke="#4a4a4a" stroke-width="1.1"/><path d="M2071 571L2047.3 579.5Q2043.3 581 2043.3 585V676Q2043.3 680 2047.3 681.5L2071 690" fill="#ffffff" stroke="#111" stroke-width="1.3"/></svg>
<span class="t" style="font-size:22px;line-height:22px;color:#000;left:2066.30px;top:320.37px;transform-origin:0 18.63px;transform:rotate(-90deg) translateX(-1.96px) scaleX(0.9791);">Interferogram Tools</span>
<span class="t" style="font-size:22px;line-height:22px;color:#000;left:2066.30px;top:406.37px;transform-origin:0 18.63px;transform:rotate(-90deg) translateX(-0.92px) scaleX(0.9195);">DFT</span>
<span class="t" style="font-size:22px;line-height:22px;color:#000;left:2066.30px;top:526.87px;transform-origin:0 18.63px;transform:rotate(-90deg) translateX(-0.94px) scaleX(0.9358);">Contour</span>
<span class="t" style="font-size:22px;line-height:22px;color:#000;left:2065.50px;top:646.17px;transform-origin:0 18.63px;transform:rotate(-90deg) translateX(-0.94px) scaleX(0.9359);">Surface</span>
<div style="left:2071.5px;top:133px;width:656.5px;height:37.5px;background:#dcdcdc;border:1px solid #c9c9c9;box-sizing:border-box;"></div>
<span class="t" style="font-size:22px;line-height:22px;color:#000;left:2075.86px;top:143px;transform:scaleX(0.9412);">Surface</span>
<svg style="left:2691.3px;top:147.6px;" width="10" height="9" viewBox="0 0 10 9"><g fill="none" stroke="#000" stroke-width="1.3"><rect x="0.7" y="3.2" width="5.6" height="5"/><path d="M3 3V0.8H9.2V6H6.5"/></g><rect x="0.7" y="3" width="5.6" height="1.4" fill="#000"/><rect x="3" y="0.5" width="6.2" height="1.3" fill="#000"/></svg>
<svg style="left:2712.6px;top:148.1px;" width="9" height="9" viewBox="0 0 9 9"><path d="M0.7 0.7L8.3 8.3M8.3 0.7L0.7 8.3" stroke="#000" stroke-width="1.5"/></svg>
<div style="left:2089px;top:203px;width:621px;height:119.5px;border:1px solid #dcdcdc;box-sizing:border-box;"></div>
<div style="left:2096px;top:201px;width:196px;height:5px;background:#f0f0f0;"></div>
<span class="t" style="font-size:22px;line-height:22px;color:#000;left:2100.09px;top:194px;transform:scaleX(0.9560);">Ignore Edge Region</span>
<div style="left:2089px;top:348px;width:621px;height:1009.5999999999999px;border:1px solid #dcdcdc;box-sizing:border-box;"></div>
<div style="left:2096px;top:346px;width:199px;height:5px;background:#f0f0f0;"></div>
<span class="t" style="font-size:22px;line-height:22px;color:#000;left:2100.30px;top:339px;transform:scaleX(0.9335);">WaveFront Selection</span>
<div style="left:2089px;top:1383px;width:621px;height:78.5px;border:1px solid #dcdcdc;box-sizing:border-box;"></div>
<div style="left:2096px;top:1381px;width:134.5px;height:5px;background:#f0f0f0;"></div>
<span class="t" style="font-size:22px;line-height:22px;color:#000;left:2099.34px;top:1374px;transform:scaleX(0.9591);">Surface Filter</span>
<div style="left:2089px;top:1487px;width:621px;height:193px;border:1px solid #dcdcdc;box-sizing:border-box;"></div>
<div style="left:2096px;top:1485px;width:83.59999999999991px;height:5px;background:#f0f0f0;"></div>
<span class="t" style="font-size:22px;line-height:22px;color:#000;left:2099.38px;top:1478px;transform:scaleX(0.9196);">Defocus</span>
<span class="t" style="font-size:22px;line-height:22px;color:#000;left:2108.30px;top:240px;transform:scaleX(0.9415);">outside Edge</span>
<span class="t" style="font-size:22px;line-height:22px;color:#000;left:2107.56px;top:281px;transform:scaleX(0.9412);">Center Edge</span>
<div style="left:2257px;top:234.8px;width:137px;height:29.5px;background:#ffffff;border:1px solid #7a7a7a;box-sizing:border-box;"></div>
<div style="left:2373px;top:236.8px;width:19px;height:25.5px;background:#f0f0f0;border:1px solid #c8c8c8;box-sizing:border-box;"></div>
<div style="left:2373px;top:249.05px;width:19px;height:1px;background:#c8c8c8;"></div>
<svg style="left:2373px;top:236.8px;" width="19" height="25.5" viewBox="0 0 19 25.5"><path d="M4.4 9.4L9.5 3.8L14.6 9.4Z M4.4 16.7L9.5 22.3L14.6 16.7Z" fill="#000"/></svg>
<div style="left:2257px;top:276px;width:137px;height:29.5px;background:#ffffff;border:1px solid #7a7a7a;box-sizing:border-box;"></div>
<div style="left:2373px;top:278px;width:19px;height:25.5px;background:#f0f0f0;border:1px solid #c8c8c8;box-sizing:border-box;"></div>
<div style="left:2373px;top:290.25px;width:19px;height:1px;background:#c8c8c8;"></div>
<svg style="left:2373px;top:278px;" width="19" height="25.5" viewBox="0 0 19 25.5"><path d="M4.4 9.4L9.5 3.8L14.6 9.4Z M4.4 16.7L9.5 22.3L14.6 16.7Z" fill="#000"/></svg>
<span class="t" style="font-size:22px;line-height:22px;color:#000;left:2261.00px;top:240px;transform:scaleX(0.7750);">0</span>
<span class="t" style="font-size:22px;line-height:22px;color:#000;left:2261.00px;top:281px;transform:scaleX(0.7750);">0</span>
<span class="t" style="font-size:22px;line-height:22px;color:#000;left:2406.30px;top:240px;transform:scaleX(0.9856);">0 mm</span>
<span class="t" style="font-size:22px;line-height:22px;color:#000;left:2406.30px;top:281px;transform:scaleX(0.9856);">0 mm</span>
<div style="left:2108px;top:380px;width:583px;height:845.5px;background:#ffffff;border:1px solid #828790;box-sizing:border-box;"></div>
<span class="t" style="font-size:24px;line-height:24px;color:#a0a0a0;left:2112.85px;top:389px;transform:scaleX(0.9456);">20200226_igram_01_01</span>
<div style="left:2110px;top:416px;width:579px;height:34px;background:#f5f5f5;"></div>
<span class="t" style="font-size:24px;line-height:24px;color:#a0a0a0;left:2112.85px;top:423px;transform:scaleX(0.9456);">20200226_igram_01_02</span>
<span class="t" style="font-size:24px;line-height:24px;color:#a0a0a0;left:2112.85px;top:457px;transform:scaleX(0.9456);">20200226_igram_02_01</span>
<div style="left:2110px;top:484px;width:579px;height:34px;background:#f5f5f5;"></div>
<span class="t" style="font-size:24px;line-height:24px;color:#a0a0a0;left:2112.85px;top:491px;transform:scaleX(0.9464);">20200226_igram_01_02_CCW090.0.wft</span>
<span class="t" style="font-size:24px;line-height:24px;color:#a0a0a0;left:2113.80px;top:525px;transform:scaleX(0.9777);">Average.wft</span>
<div style="left:2110px;top:552px;width:579px;height:34px;background:#f5f5f5;"></div>
<span class="t" style="font-size:24px;line-height:24px;color:#a0a0a0;left:2112.85px;top:559px;transform:scaleX(0.9456);">20200226_igram_03_01</span>
<span class="t" style="font-size:24px;line-height:24px;color:#a0a0a0;left:2112.85px;top:593px;transform:scaleX(0.9456);">20200226_igram_03_02</span>
<div style="left:2110px;top:620px;width:579px;height:34px;background:#f5f5f5;"></div>
<span class="t" style="font-size:24px;line-height:24px;color:#a0a0a0;left:2113.80px;top:627px;transform:scaleX(0.9777);">Average.wft</span>
<span class="t" style="font-size:24px;line-height:24px;color:#a0a0a0;left:2112.85px;top:661px;transform:scaleX(0.9456);">20200226_igram_04_01</span>
<div style="left:2110px;top:688px;width:579px;height:34px;background:#f5f5f5;"></div>
<span class="t" style="font-size:24px;line-height:24px;color:#a0a0a0;left:2112.85px;top:695px;transform:scaleX(0.9456);">20200226_igram_04_02</span>
<span class="t" style="font-size:24px;line-height:24px;color:#a0a0a0;left:2113.80px;top:729px;transform:scaleX(0.9777);">Average.wft</span>
<div style="left:2110px;top:756px;width:579px;height:34px;background:#f5f5f5;"></div>
<span class="t" style="font-size:24px;line-height:24px;color:#a0a0a0;left:2112.85px;top:763px;transform:scaleX(0.9456);">20200226_igram_05_01</span>
<span class="t" style="font-size:24px;line-height:24px;color:#a0a0a0;left:2112.85px;top:797px;transform:scaleX(0.9456);">20200226_igram_06_01</span>
<div style="left:2110px;top:824px;width:579px;height:34px;background:#f5f5f5;"></div>
<span class="t" style="font-size:24px;line-height:24px;color:#000;left:2112.85px;top:831px;transform:scaleX(0.9456);">20200226_igram_07_01</span>
<div style="left:2110.5px;top:858px;width:579px;height:34px;background:#cce8ff;border:1px dotted #2b2b2b;box-sizing:border-box;"></div>
<span class="t" style="font-size:24px;line-height:24px;color:#000;left:2112.85px;top:865px;transform:scaleX(0.9456);">20200226_igram_08_01</span>
<div style="left:2110px;top:892px;width:579px;height:34px;background:#f5f5f5;"></div>
<span class="t" style="font-size:24px;line-height:24px;color:#a0a0a0;left:2112.85px;top:899px;transform:scaleX(0.9456);">20200226_igram_08_01</span>
<span class="t" style="font-size:24px;line-height:24px;color:#a0a0a0;left:2112.85px;top:933px;transform:scaleX(0.9456);">20200226_igram_08_01</span>
<div style="left:2110px;top:960px;width:579px;height:34px;background:#f5f5f5;"></div>
<span class="t" style="font-size:24px;line-height:24px;color:#a0a0a0;left:2112.85px;top:967px;transform:scaleX(0.9456);">20200226_igram_09_02</span>
<span class="t" style="font-size:24px;line-height:24px;color:#a0a0a0;left:2112.85px;top:1001px;transform:scaleX(0.9456);">20200226_igram_10_01</span>
<div style="left:2110px;top:1028px;width:579px;height:34px;background:#f5f5f5;"></div>
<span class="t" style="font-size:24px;line-height:24px;color:#a0a0a0;left:2112.85px;top:1035px;transform:scaleX(0.9456);">20200226_igram_10_02</span>
<span class="t" style="font-size:24px;line-height:24px;color:#a0a0a0;left:2113.80px;top:1069px;transform:scaleX(0.9777);">Average.wft</span>
<div style="left:2108px;top:1238px;width:137px;height:29.5px;background:#f0f0f0;border-radius:5px;box-shadow:inset 2.4px 2.4px 0 0 #ffffff, inset -2.4px -2.4px 0 0 #a2a2a2;"></div>
<div style="left:2257.5px;top:1241px;width:284.3000000000002px;height:23.5px;background:#f0f0f0;border-radius:5px;box-shadow:inset 2.4px 2.4px 0 0 #ffffff, inset -2.4px -2.4px 0 0 #a2a2a2;"></div>
<div style="left:2554.5px;top:1241px;width:137.0px;height:23.5px;background:#f0f0f0;border-radius:5px;box-shadow:inset 2.4px 2.4px 0 0 #ffffff, inset -2.4px -2.4px 0 0 #a2a2a2;"></div>
<div style="left:2108px;top:1280.3px;width:286px;height:23.5px;background:#f0f0f0;border-radius:5px;box-shadow:inset 2.4px 2.4px 0 0 #ffffff, inset -2.4px -2.4px 0 0 #a2a2a2;"></div>
<div style="left:2406px;top:1280.3px;width:135.80000000000018px;height:23.5px;background:#f0f0f0;border-radius:5px;box-shadow:inset 2.4px 2.4px 0 0 #ffffff, inset -2.4px -2.4px 0 0 #a2a2a2;"></div>
<div style="left:2554.5px;top:1280.3px;width:137.0px;height:23.5px;background:#f0f0f0;border-radius:5px;box-shadow:inset 2.4px 2.4px 0 0 #ffffff, inset -2.4px -2.4px 0 0 #a2a2a2;"></div>
<div style="left:2108px;top:1316.3px;width:433.8000000000002px;height:23.5px;background:#f0f0f0;border-radius:5px;box-shadow:inset 2.4px 2.4px 0 0 #ffffff, inset -2.4px -2.4px 0 0 #a2a2a2;"></div>
<div style="left:2554.5px;top:1316.3px;width:137.0px;height:23.5px;background:#f0f0f0;border-radius:5px;box-shadow:inset 2.4px 2.4px 0 0 #ffffff, inset -2.4px -2.4px 0 0 #a2a2a2;"></div>
<span class="t" style="font-size:13px;line-height:13px;color:#000;left:2378.22px;top:1247px;transform:scaleX(0.9765);">Rotate</span>
<span class="t" style="font-size:13px;line-height:13px;color:#000;left:2600.30px;top:1247px;transform:scaleX(0.9175);">Average</span>
<span class="t" style="font-size:13px;line-height:13px;color:#000;left:2231.28px;top:1286px;transform:scaleX(1.0156);">Invert</span>
<span class="t" style="font-size:13px;line-height:13px;color:#000;left:2449.30px;top:1286px;transform:scaleX(0.9226);">Select All</span>
<span class="t" style="font-size:13px;line-height:13px;color:#000;left:2589.40px;top:1286px;transform:scaleX(0.9335);">Select None</span>
<span class="t" style="font-size:13px;line-height:13px;color:#000;left:2248.23px;top:1322px;transform:scaleX(0.9692);">Update selected wavefonts</span>
<span class="t" style="font-size:13px;line-height:13px;color:#000;left:2608.41px;top:1322px;transform:scaleX(0.8929);">Filter</span>
<svg style="left:2165px;top:1242px;" width="22" height="22" viewBox="0 0 22 22"><defs><radialGradient id="rg2" cx="35%" cy="28%" r="80%"><stop offset="0" stop-color="#ff3a10"/><stop offset="0.6" stop-color="#e00800"/><stop offset="1" stop-color="#8a0000"/></radialGradient></defs>
<circle cx="11" cy="11" r="9.7" fill="url(#rg2)" stroke="#3a0000" stroke-width="0.9"/>
<path d="M7.4 7.4L14.6 14.6M14.6 7.4L7.4 14.6" stroke="#fff" stroke-width="2.7" stroke-linecap="round"/></svg>
<svg style="left:2108px;top:1416px;" width="26" height="26" viewBox="0 0 26 26"><rect x="1" y="1" width="24" height="24" fill="#fff" stroke="#333" stroke-width="2"/><path d="M4.7 12.7L10.7 18.7L22.6 6.2" fill="none" stroke="#333" stroke-width="1.9"/></svg>
<span class="t" style="font-size:22px;line-height:22px;color:#000;left:2144.85px;top:1420px;transform:scaleX(0.9459);">Gaussian Blur diameter</span>
<div style="left:2463.5px;top:1415.3px;width:115.5px;height:29px;background:#ffffff;border:1px solid #7a7a7a;box-sizing:border-box;"></div>
<div style="left:2559.0px;top:1417.3px;width:18px;height:25px;background:#f0f0f0;border:1px solid #c8c8c8;box-sizing:border-box;"></div>
<div style="left:2559.0px;top:1429.3px;width:18px;height:1px;background:#c8c8c8;"></div>
<svg style="left:2559.0px;top:1417.3px;" width="18" height="25" viewBox="0 0 18 25"><path d="M3.9 9.2L9.0 3.7L14.1 9.2Z M3.9 16.4L9.0 22.0L14.1 16.4Z" fill="#000"/></svg>
<span class="t" style="font-size:22px;line-height:22px;color:#000;left:2465.84px;top:1420px;transform:scaleX(0.9625);">20,00 %</span>
<span class="t" style="font-size:22px;line-height:22px;color:#000;left:2598.30px;top:1420px;transform:scaleX(0.9534);">80.00 mm</span>
<svg style="left:2108px;top:1521.3px;" width="26" height="26" viewBox="0 0 26 26"><rect x="1" y="1" width="24" height="24" fill="#fff" stroke="#333" stroke-width="2"/></svg>
<span class="t" style="font-size:22px;line-height:22px;color:#000;left:2144.88px;top:1525px;transform:scaleX(0.9202);">Enable</span>
<div style="left:2225px;top:1519px;width:395px;height:30.5px;background:#f0f0f0;box-shadow:inset 1px 1px 0 0 #c6c6c6, inset -1px -1px 0 0 #ffffff, inset 2px 2px 0 0 #ffffff;"></div>
<span class="t" style="font-size:22px;line-height:22px;color:#000;left:2632.80px;top:1525px;transform:scaleX(0.8763);">Waves</span>
<span class="t" style="font-size:22px;line-height:22px;color:#000;left:2609.50px;top:1603px;transform:scaleX(0.9685);">0  mm</span>
<svg style="left:2100px;top:1550px;" width="125" height="125" viewBox="0 0 125 125"><defs><radialGradient id="kn" cx="45%" cy="40%" r="60%"><stop offset="0" stop-color="#ebebeb"/><stop offset="1" stop-color="#d2d2d2"/></radialGradient></defs>
<g stroke="#787878" stroke-width="0.95"><line x1="39.60" y1="98.38" x2="35.25" y2="105.91"/><line x1="34.24" y1="98.35" x2="31.60" y2="101.99"/><line x1="30.62" y1="95.42" x2="27.61" y2="98.76"/><line x1="27.33" y1="92.13" x2="23.99" y2="95.14"/><line x1="24.40" y1="88.51" x2="20.76" y2="91.15"/><line x1="24.37" y1="83.15" x2="16.84" y2="87.50"/><line x1="19.75" y1="80.45" x2="15.64" y2="82.28"/><line x1="18.08" y1="76.10" x2="13.80" y2="77.49"/><line x1="16.87" y1="71.60" x2="12.47" y2="72.54"/><line x1="16.14" y1="67.00" x2="11.67" y2="67.47"/><line x1="18.80" y1="62.35" x2="10.10" y2="62.35"/><line x1="16.14" y1="57.70" x2="11.67" y2="57.23"/><line x1="16.87" y1="53.10" x2="12.47" y2="52.16"/><line x1="18.08" y1="48.60" x2="13.80" y2="47.21"/><line x1="19.75" y1="44.25" x2="15.64" y2="42.42"/><line x1="24.37" y1="41.55" x2="16.84" y2="37.20"/><line x1="24.40" y1="36.19" x2="20.76" y2="33.55"/><line x1="27.33" y1="32.57" x2="23.99" y2="29.56"/><line x1="30.62" y1="29.28" x2="27.61" y2="25.94"/><line x1="34.24" y1="26.35" x2="31.60" y2="22.71"/><line x1="39.60" y1="26.32" x2="35.25" y2="18.79"/><line x1="42.30" y1="21.70" x2="40.47" y2="17.59"/><line x1="46.65" y1="20.03" x2="45.26" y2="15.75"/><line x1="51.15" y1="18.82" x2="50.21" y2="14.42"/><line x1="55.75" y1="18.09" x2="55.28" y2="13.62"/><line x1="60.40" y1="20.75" x2="60.40" y2="12.05"/><line x1="65.05" y1="18.09" x2="65.52" y2="13.62"/><line x1="69.65" y1="18.82" x2="70.59" y2="14.42"/><line x1="74.15" y1="20.03" x2="75.54" y2="15.75"/><line x1="78.50" y1="21.70" x2="80.33" y2="17.59"/><line x1="81.20" y1="26.32" x2="85.55" y2="18.79"/><line x1="86.56" y1="26.35" x2="89.20" y2="22.71"/><line x1="90.18" y1="29.28" x2="93.19" y2="25.94"/><line x1="93.47" y1="32.57" x2="96.81" y2="29.56"/><line x1="96.40" y1="36.19" x2="100.04" y2="33.55"/><line x1="96.43" y1="41.55" x2="103.96" y2="37.20"/><line x1="101.05" y1="44.25" x2="105.16" y2="42.42"/><line x1="102.72" y1="48.60" x2="107.00" y2="47.21"/><line x1="103.93" y1="53.10" x2="108.33" y2="52.16"/><line x1="104.66" y1="57.70" x2="109.13" y2="57.23"/><line x1="102.00" y1="62.35" x2="110.70" y2="62.35"/><line x1="104.66" y1="67.00" x2="109.13" y2="67.47"/><line x1="103.93" y1="71.60" x2="108.33" y2="72.54"/><line x1="102.72" y1="76.10" x2="107.00" y2="77.49"/><line x1="101.05" y1="80.45" x2="105.16" y2="82.28"/><line x1="96.43" y1="83.15" x2="103.96" y2="87.50"/><line x1="96.40" y1="88.51" x2="100.04" y2="91.15"/><line x1="93.47" y1="92.13" x2="96.81" y2="95.14"/><line x1="90.18" y1="95.42" x2="93.19" y2="98.76"/><line x1="86.56" y1="98.35" x2="89.20" y2="101.99"/><line x1="81.20" y1="98.38" x2="85.55" y2="105.91"/></g>
<circle cx="60.4" cy="62.35" r="39.6" fill="#f1f1f1" stroke="#606060" stroke-width="0.95"/>
<circle cx="60.4" cy="34.55" r="7.1" fill="url(#kn)" stroke="#a4a4a4" stroke-width="0.9"/></svg>
<span class="t" style="font-size:24px;line-height:24px;color:#000;left:35.96px;top:1711px;transform:scaleX(1.0433);">refining outside outline position.</span>
<div style="left:1813px;top:1702px;width:1px;height:40px;background:#d4d4d4;"></div>
<div style="left:1818.5px;top:1702px;width:843px;height:39.5px;background:#e6e6e6;border:1px solid #bcbcbc;box-sizing:border-box;"></div>
<div style="left:0px;top:1744px;width:2728px;height:2px;background:#161616;"></div>
<div style="left:88px;top:1744px;width:687px;height:1px;background:#c2c2c2;"></div>
<div style="left:88px;top:1745px;width:687px;height:1px;background:#f2f2f2;"></div>
</body></html>
